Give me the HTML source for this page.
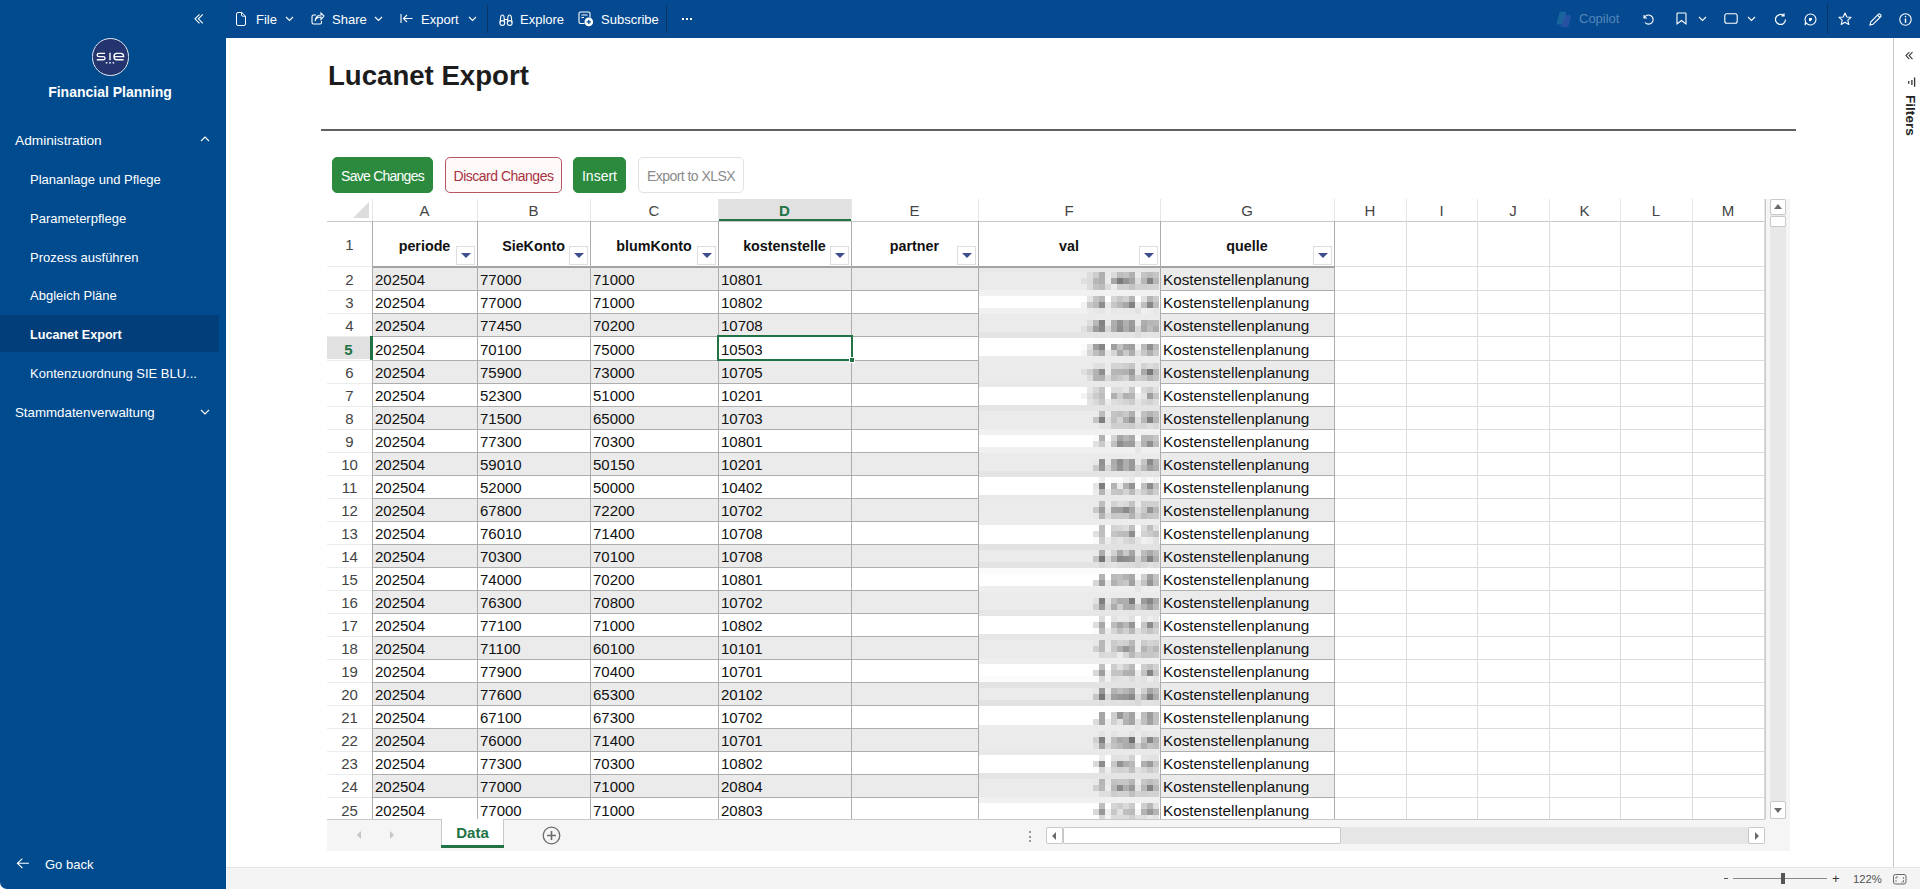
<!DOCTYPE html>
<html><head><meta charset="utf-8"><title>Lucanet Export</title>
<style>
*{box-sizing:border-box}
html,body{margin:0;padding:0}
body{width:1920px;height:889px;overflow:hidden;position:relative;background:#fff;font-family:"Liberation Sans", sans-serif;color:#222}
.abs{position:absolute}
#side{position:absolute;left:0;top:0;width:226px;height:889px;background:#004b8e;border-bottom-left-radius:7px;color:#fff}
#top{position:absolute;left:226px;top:0;width:1694px;height:38px;background:#054a91;color:#fff}
.nav{position:absolute;font-size:13px;color:#fff;white-space:nowrap;line-height:16px}
.tb{position:absolute;font-size:13px;color:#fff;white-space:nowrap;line-height:16px;top:12px}
.cell{position:absolute;font-size:15px;line-height:17px;white-space:nowrap;color:#111}
.hl{position:absolute;background:#adadad}
.ll{position:absolute;background:#dcdcdc}
.colh{position:absolute;top:201.5px;font-size:15px;line-height:17px;color:#444;text-align:center}
.rowh{position:absolute;left:327px;width:45px;font-size:15px;line-height:17px;color:#444;text-align:center}
.btn{position:absolute;top:157px;height:36px;border-radius:5px;font-size:13px;line-height:36px;text-align:center;white-space:nowrap}
.flt{position:absolute;width:19px;height:19px;border:1px solid #dedede;background:#fff}
.flt:after{content:"";position:absolute;left:4px;top:6px;border-left:5px solid transparent;border-right:5px solid transparent;border-top:5px solid #3d4f8e}
svg{position:absolute;overflow:visible}
</style></head><body>

<div id="side">
<svg style="left:193px;top:12px" width="12" height="12" viewBox="0 0 12 12"><path d="M6.5 2.4 L2 6.8 L6.5 11.3 M9.8 2.4 L5.4 6.8 L9.8 11.3" fill="none" stroke="#fff" stroke-width="1.1"/></svg>
<div class="abs" style="left:91.5px;top:38px;width:37.5px;height:37.5px;border-radius:50%;background:#23346f;border:1.4px solid #e4e7f0"></div>
<svg style="left:0;top:0" width="226" height="80"><path d="M105 53.4 L99 53.4 Q97.2 53.4 97.2 55 Q97.2 56.6 99 56.6 L103.2 56.6 Q105 56.6 105 58.2 Q105 59.8 103.2 59.8 L96.8 59.8 M110 52.8 L110 60.2 M123.6 59.8 L116.5 59.8 Q114 59.8 114 56.6 Q114 53.4 116.5 53.4 L121 53.4 Q123.6 53.4 123.6 56.6 L114 56.6" fill="none" stroke="#fff" stroke-width="1.4"/><rect x="105.8" y="62" width="1.6" height="1.6" fill="#dfe3ee"/><rect x="109.2" y="62" width="1.6" height="1.6" fill="#dfe3ee"/><rect x="112.6" y="62" width="1.6" height="1.6" fill="#dfe3ee"/></svg>
<div class="nav" style="left:0;top:83px;width:220px;text-align:center;font-weight:bold;font-size:14px;line-height:18px">Financial Planning</div>
<div class="nav" style="left:15px;top:132.5px;font-size:13.7px">Administration</div>
<svg style="left:200px;top:136px" width="10" height="6" viewBox="0 0 10 6"><path d="M1 5 L5 1 L9 5" fill="none" stroke="#fff" stroke-width="1.1"/></svg>
<div class="nav" style="left:30px;top:172px">Plananlage und Pflege</div>
<div class="nav" style="left:30px;top:211px">Parameterpflege</div>
<div class="nav" style="left:30px;top:250px">Prozess ausführen</div>
<div class="nav" style="left:30px;top:288px">Abgleich Pläne</div>
<div class="abs" style="left:0;top:315px;width:219px;height:37px;background:#023f7a"></div>
<div class="nav" style="left:30px;top:327px;font-weight:bold;font-size:12.6px">Lucanet Export</div>
<div class="nav" style="left:30px;top:366px">Kontenzuordnung SIE BLU...</div>
<div class="nav" style="left:15px;top:404.5px;font-size:13.3px">Stammdatenverwaltung</div>
<svg style="left:200px;top:409px" width="10" height="6" viewBox="0 0 10 6"><path d="M1 1 L5 5 L9 1" fill="none" stroke="#fff" stroke-width="1.1"/></svg>
<svg style="left:16px;top:857px" width="14" height="13" viewBox="0 0 14 13"><path d="M6.4 1.6 L1.4 6.3 L6.4 11 M1.4 6.3 L12.9 6.3" fill="none" stroke="#fff" stroke-width="1.1"/></svg>
<div class="nav" style="left:45px;top:857px">Go back</div>
</div>
<div id="top"></div>
<svg style="left:235px;top:11px" width="12" height="16" viewBox="0 0 12 16"><path d="M1.5 3 Q1.5 1.5 3 1.5 L6.8 1.5 L10.5 5.2 L10.5 13 Q10.5 14.5 9 14.5 L3 14.5 Q1.5 14.5 1.5 13 Z M6.5 1.5 L6.5 4 Q6.5 5.2 7.7 5.2 L10.5 5.2" fill="none" stroke="#fff" stroke-width="1"/></svg>
<div class="tb" style="left:256px">File</div>
<svg style="left:285px;top:16px" width="9" height="6" viewBox="0 0 9 6"><path d="M1 1 L4.5 4.5 L8 1" fill="none" stroke="#fff" stroke-width="1.1"/></svg>
<svg style="left:311px;top:12px" width="14" height="13" viewBox="0 0 14 13"><path d="M5 3 L2.5 3 Q1 3 1 4.5 L1 10.5 Q1 12 2.5 12 L9 12 Q10.5 12 10.5 10.5 L10.5 9 M4 9 Q5 5 10 5 L10 7.5 L13 4 L10 1 L10 3 Q5 3 4 9" fill="none" stroke="#fff" stroke-width="1.1"/></svg>
<div class="tb" style="left:332px">Share</div>
<svg style="left:374px;top:16px" width="9" height="6" viewBox="0 0 9 6"><path d="M1 1 L4.5 4.5 L8 1" fill="none" stroke="#fff" stroke-width="1.1"/></svg>
<svg style="left:400px;top:13px" width="13" height="11" viewBox="0 0 13 11"><path d="M1 1 L1 10 M12.5 5.5 L3.5 5.5 M7 2 L3.5 5.5 L7 9" fill="none" stroke="#fff" stroke-width="1.1"/></svg>
<div class="tb" style="left:421px">Export</div>
<svg style="left:468px;top:16px" width="9" height="6" viewBox="0 0 9 6"><path d="M1 1 L4.5 4.5 L8 1" fill="none" stroke="#fff" stroke-width="1.1"/></svg>
<div class="abs" style="left:487px;top:5px;width:1px;height:28px;background:#063466"></div>
<svg style="left:498px;top:13px" width="16" height="14" viewBox="0 0 16 14"><path d="M2 9.5 L2.8 3.5 Q3.2 2 4.3 2 Q5.6 2 6 3.5 L6.6 9.5 M9.4 9.5 L10 3.5 Q10.4 2 11.7 2 Q12.8 2 13.2 3.5 L14 9.5 M6.3 6.5 L9.7 6.5" fill="none" stroke="#fff" stroke-width="1.1"/><circle cx="4.3" cy="10" r="2.4" fill="none" stroke="#fff" stroke-width="1.1"/><circle cx="11.7" cy="10" r="2.4" fill="none" stroke="#fff" stroke-width="1.1"/></svg>
<div class="tb" style="left:520px">Explore</div>
<svg style="left:578px;top:11px" width="16" height="16" viewBox="0 0 16 16"><path d="M6.5 12.5 L2.5 12.5 Q1 12.5 1 11 L1 2.5 Q1 1 2.5 1 L10.5 1 Q12 1 12 2.5 L12 6.5 M3.5 4 L9.5 4 M3.5 6.5 L6 6.5" fill="none" stroke="#fff" stroke-width="1.1"/><circle cx="10.8" cy="10.9" r="4.3" fill="#fff"/><path d="M10.8 8.7 L10.8 13.1 M8.6 10.9 L13 10.9" stroke="#054a91" stroke-width="1.3"/></svg>
<div class="tb" style="left:601px">Subscribe</div>
<div class="abs" style="left:666px;top:5px;width:1px;height:28px;background:#063466"></div>
<div class="abs" style="left:682px;top:18px;width:2px;height:2px;background:#fff;box-shadow:4px 0 #fff,8px 0 #fff"></div>
<svg style="left:1555px;top:11px" width="18" height="17" viewBox="0 0 18 17"><path d="M4.5 1.5 Q5 0.8 6 0.8 L11.5 0.8 L8.5 12 Q8 13.5 6.5 13.5 L3 13.5 Q1.2 13.5 1.8 11.5 Z" fill="#1f6aa0" opacity="0.8"/><path d="M9.5 5 Q10 4 11 4 L14.5 4 Q16.3 4 15.8 6 L13.5 15 Q13 16.2 12 16.2 L5.5 16.2 Z" fill="#2d53a5" opacity="0.8"/></svg>
<div class="tb" style="left:1579px;top:11px;color:#5585b8">Copilot</div>
<svg style="left:1642px;top:13px" width="12" height="12" viewBox="0 0 12 12"><path d="M2 2 L2 5 L5 5 M2.3 4.8 A4.6 4.6 0 1 1 3 9.5" fill="none" stroke="#fff" stroke-width="1.1"/></svg>
<svg style="left:1676px;top:12px" width="11" height="13" viewBox="0 0 11 13"><path d="M1 1.8 Q1 1 1.8 1 L9.2 1 Q10 1 10 1.8 L10 12 L5.5 8.5 L1 12 Z" fill="none" stroke="#fff" stroke-width="1.1"/></svg>
<svg style="left:1698px;top:16px" width="9" height="6" viewBox="0 0 9 6"><path d="M1 1 L4.5 4.5 L8 1" fill="none" stroke="#fff" stroke-width="1.1"/></svg>
<svg style="left:1724px;top:13px" width="14" height="11" viewBox="0 0 14 11"><rect x="0.8" y="0.8" width="12.4" height="9.4" rx="2" fill="none" stroke="#fff" stroke-width="1.1"/></svg>
<svg style="left:1747px;top:16px" width="9" height="6" viewBox="0 0 9 6"><path d="M1 1 L4.5 4.5 L8 1" fill="none" stroke="#fff" stroke-width="1.1"/></svg>
<svg style="left:1774px;top:13px" width="13" height="13" viewBox="0 0 13 13"><path d="M11.5 6.5 A5 5 0 1 1 9.8 2.7 M10 0.5 L10 3 L7.5 3" fill="none" stroke="#fff" stroke-width="1.2"/></svg>
<svg style="left:1804px;top:13px" width="13" height="13" viewBox="0 0 13 13"><path d="M6.5 1 A5.5 5.5 0 1 1 2.3 10 L1 12 L1.5 8.8 A5.5 5.5 0 0 1 6.5 1 Z " fill="none" stroke="#fff" stroke-width="1.1"/><path d="M5 5 L8 5 L8 6.6 L6.5 8.2 L5 8.2 Z" fill="#fff"/></svg>
<div class="abs" style="left:1827px;top:4px;width:1px;height:30px;background:#063466"></div>
<svg style="left:1838px;top:12px" width="14" height="14" viewBox="0 0 14 14"><path d="M7 1 L8.8 5 L13 5.3 L9.8 8.1 L10.8 12.5 L7 10.2 L3.2 12.5 L4.2 8.1 L1 5.3 L5.2 5 Z" fill="none" stroke="#fff" stroke-width="1.1" stroke-linejoin="round"/></svg>
<svg style="left:1869px;top:13px" width="13" height="13" viewBox="0 0 13 13"><path d="M1 12 L1.7 9 L9.5 1.2 Q10.3 0.5 11.1 1.3 L11.8 2 Q12.5 2.8 11.8 3.5 L4 11.3 Z M8.5 2.2 L10.8 4.5" fill="none" stroke="#fff" stroke-width="1.1"/></svg>
<svg style="left:1899px;top:13px" width="13" height="13" viewBox="0 0 13 13"><circle cx="6.5" cy="6.5" r="5.7" fill="none" stroke="#fff" stroke-width="1.1"/><path d="M6.5 5.5 L6.5 9.8" stroke="#fff" stroke-width="1.4"/><circle cx="6.5" cy="3.6" r="0.8" fill="#fff"/></svg>
<div class="abs" style="left:328px;top:60px;font-size:27.6px;font-weight:bold;color:#1c1c1c;line-height:32px;white-space:nowrap">Lucanet Export</div>
<div class="abs" style="left:321px;top:129px;width:1475px;height:2px;background:#606060"></div>
<div class="btn" style="left:332px;width:101px;background:#2b8a3e;color:#fff;border:1px solid #2b8a3e;font-size:14px;letter-spacing:-0.75px">Save Changes</div>
<div class="btn" style="left:445px;width:117px;background:#fdf9f9;color:#a8323e;border:1px solid #b85660;font-size:14px;letter-spacing:-0.5px">Discard Changes</div>
<div class="btn" style="left:573px;width:53px;background:#2b8a3e;color:#fff;border:1px solid #2b8a3e;font-size:14px">Insert</div>
<div class="btn" style="left:638px;width:106px;background:#fff;color:#8a8a8a;border:1px solid #e2e2e2;font-size:14px;letter-spacing:-0.55px">Export to XLSX</div>
<div class="abs" style="left:372px;top:267px;width:962px;height:23px;background:#ebebeb"></div>
<div class="abs" style="left:372px;top:313px;width:962px;height:23px;background:#ebebeb"></div>
<div class="abs" style="left:372px;top:360px;width:962px;height:23px;background:#ebebeb"></div>
<div class="abs" style="left:372px;top:406px;width:962px;height:23px;background:#ebebeb"></div>
<div class="abs" style="left:372px;top:452px;width:962px;height:23px;background:#ebebeb"></div>
<div class="abs" style="left:372px;top:498px;width:962px;height:23px;background:#ebebeb"></div>
<div class="abs" style="left:372px;top:544px;width:962px;height:23px;background:#ebebeb"></div>
<div class="abs" style="left:372px;top:590px;width:962px;height:23px;background:#ebebeb"></div>
<div class="abs" style="left:372px;top:636px;width:962px;height:23px;background:#ebebeb"></div>
<div class="abs" style="left:372px;top:682px;width:962px;height:23px;background:#ebebeb"></div>
<div class="abs" style="left:372px;top:728px;width:962px;height:23px;background:#ebebeb"></div>
<div class="abs" style="left:372px;top:774px;width:962px;height:23px;background:#ebebeb"></div>
<div class="abs" style="left:718px;top:199px;width:133px;height:22px;background:#e1e1e1"></div>
<div class="abs" style="left:718px;top:219px;width:134px;height:2px;background:#217346"></div>
<div class="abs" style="left:327px;top:336px;width:44px;height:23px;background:#e1e1e1"></div>
<svg style="left:353px;top:202px" width="16" height="16" viewBox="0 0 16 16"><path d="M16 0 L16 16 L0 16 Z" fill="#dcdcdc"/></svg>
<div class="ll" style="left:372px;top:199px;width:1px;height:22px;background:#e6e6e6"></div>
<div class="ll" style="left:477px;top:199px;width:1px;height:22px;background:#e6e6e6"></div>
<div class="ll" style="left:590px;top:199px;width:1px;height:22px;background:#e6e6e6"></div>
<div class="ll" style="left:718px;top:199px;width:1px;height:22px;background:#e6e6e6"></div>
<div class="ll" style="left:851px;top:199px;width:1px;height:22px;background:#e6e6e6"></div>
<div class="ll" style="left:978px;top:199px;width:1px;height:22px;background:#e6e6e6"></div>
<div class="ll" style="left:1160px;top:199px;width:1px;height:22px;background:#e6e6e6"></div>
<div class="ll" style="left:1334px;top:199px;width:1px;height:22px;background:#e6e6e6"></div>
<div class="ll" style="left:1406px;top:199px;width:1px;height:22px;background:#e6e6e6"></div>
<div class="ll" style="left:1477px;top:199px;width:1px;height:22px;background:#e6e6e6"></div>
<div class="ll" style="left:1549px;top:199px;width:1px;height:22px;background:#e6e6e6"></div>
<div class="ll" style="left:1620px;top:199px;width:1px;height:22px;background:#e6e6e6"></div>
<div class="ll" style="left:1692px;top:199px;width:1px;height:22px;background:#e6e6e6"></div>
<div class="ll" style="left:1764px;top:199px;width:1px;height:22px;background:#e6e6e6"></div>
<div class="abs" style="left:327px;top:221px;width:1438px;height:1px;background:#c8c8c8"></div>
<div class="colh" style="left:372px;width:105px;">A</div>
<div class="colh" style="left:477px;width:113px;">B</div>
<div class="colh" style="left:590px;width:128px;">C</div>
<div class="colh" style="left:718px;width:133px;color:#217346;font-weight:bold">D</div>
<div class="colh" style="left:851px;width:127px;">E</div>
<div class="colh" style="left:978px;width:182px;">F</div>
<div class="colh" style="left:1160px;width:174px;">G</div>
<div class="colh" style="left:1334px;width:72px;">H</div>
<div class="colh" style="left:1406px;width:71px;">I</div>
<div class="colh" style="left:1477px;width:72px;">J</div>
<div class="colh" style="left:1549px;width:71px;">K</div>
<div class="colh" style="left:1620px;width:72px;">L</div>
<div class="colh" style="left:1692px;width:72px;">M</div>
<div class="hl" style="left:372px;top:266px;width:962px;height:2px;background:#a3a3a3"></div>
<div class="ll" style="left:1334px;top:266px;width:431px;height:1px"></div>
<div class="ll" style="left:327px;top:266px;width:45px;height:1px;background:#ececec"></div>
<div class="hl" style="left:372px;top:290px;width:962px;height:1px"></div>
<div class="ll" style="left:1334px;top:290px;width:431px;height:1px"></div>
<div class="ll" style="left:327px;top:290px;width:45px;height:1px;background:#ececec"></div>
<div class="hl" style="left:372px;top:313px;width:962px;height:1px"></div>
<div class="ll" style="left:1334px;top:313px;width:431px;height:1px"></div>
<div class="ll" style="left:327px;top:313px;width:45px;height:1px;background:#ececec"></div>
<div class="hl" style="left:372px;top:336px;width:962px;height:1px"></div>
<div class="ll" style="left:1334px;top:336px;width:431px;height:1px"></div>
<div class="ll" style="left:327px;top:336px;width:45px;height:1px;background:#ececec"></div>
<div class="hl" style="left:372px;top:360px;width:962px;height:1px"></div>
<div class="ll" style="left:1334px;top:360px;width:431px;height:1px"></div>
<div class="ll" style="left:327px;top:360px;width:45px;height:1px;background:#ececec"></div>
<div class="hl" style="left:372px;top:383px;width:962px;height:1px"></div>
<div class="ll" style="left:1334px;top:383px;width:431px;height:1px"></div>
<div class="ll" style="left:327px;top:383px;width:45px;height:1px;background:#ececec"></div>
<div class="hl" style="left:372px;top:406px;width:962px;height:1px"></div>
<div class="ll" style="left:1334px;top:406px;width:431px;height:1px"></div>
<div class="ll" style="left:327px;top:406px;width:45px;height:1px;background:#ececec"></div>
<div class="hl" style="left:372px;top:429px;width:962px;height:1px"></div>
<div class="ll" style="left:1334px;top:429px;width:431px;height:1px"></div>
<div class="ll" style="left:327px;top:429px;width:45px;height:1px;background:#ececec"></div>
<div class="hl" style="left:372px;top:452px;width:962px;height:1px"></div>
<div class="ll" style="left:1334px;top:452px;width:431px;height:1px"></div>
<div class="ll" style="left:327px;top:452px;width:45px;height:1px;background:#ececec"></div>
<div class="hl" style="left:372px;top:475px;width:962px;height:1px"></div>
<div class="ll" style="left:1334px;top:475px;width:431px;height:1px"></div>
<div class="ll" style="left:327px;top:475px;width:45px;height:1px;background:#ececec"></div>
<div class="hl" style="left:372px;top:498px;width:962px;height:1px"></div>
<div class="ll" style="left:1334px;top:498px;width:431px;height:1px"></div>
<div class="ll" style="left:327px;top:498px;width:45px;height:1px;background:#ececec"></div>
<div class="hl" style="left:372px;top:521px;width:962px;height:1px"></div>
<div class="ll" style="left:1334px;top:521px;width:431px;height:1px"></div>
<div class="ll" style="left:327px;top:521px;width:45px;height:1px;background:#ececec"></div>
<div class="hl" style="left:372px;top:544px;width:962px;height:1px"></div>
<div class="ll" style="left:1334px;top:544px;width:431px;height:1px"></div>
<div class="ll" style="left:327px;top:544px;width:45px;height:1px;background:#ececec"></div>
<div class="hl" style="left:372px;top:567px;width:962px;height:1px"></div>
<div class="ll" style="left:1334px;top:567px;width:431px;height:1px"></div>
<div class="ll" style="left:327px;top:567px;width:45px;height:1px;background:#ececec"></div>
<div class="hl" style="left:372px;top:590px;width:962px;height:1px"></div>
<div class="ll" style="left:1334px;top:590px;width:431px;height:1px"></div>
<div class="ll" style="left:327px;top:590px;width:45px;height:1px;background:#ececec"></div>
<div class="hl" style="left:372px;top:613px;width:962px;height:1px"></div>
<div class="ll" style="left:1334px;top:613px;width:431px;height:1px"></div>
<div class="ll" style="left:327px;top:613px;width:45px;height:1px;background:#ececec"></div>
<div class="hl" style="left:372px;top:636px;width:962px;height:1px"></div>
<div class="ll" style="left:1334px;top:636px;width:431px;height:1px"></div>
<div class="ll" style="left:327px;top:636px;width:45px;height:1px;background:#ececec"></div>
<div class="hl" style="left:372px;top:659px;width:962px;height:1px"></div>
<div class="ll" style="left:1334px;top:659px;width:431px;height:1px"></div>
<div class="ll" style="left:327px;top:659px;width:45px;height:1px;background:#ececec"></div>
<div class="hl" style="left:372px;top:682px;width:962px;height:1px"></div>
<div class="ll" style="left:1334px;top:682px;width:431px;height:1px"></div>
<div class="ll" style="left:327px;top:682px;width:45px;height:1px;background:#ececec"></div>
<div class="hl" style="left:372px;top:705px;width:962px;height:1px"></div>
<div class="ll" style="left:1334px;top:705px;width:431px;height:1px"></div>
<div class="ll" style="left:327px;top:705px;width:45px;height:1px;background:#ececec"></div>
<div class="hl" style="left:372px;top:728px;width:962px;height:1px"></div>
<div class="ll" style="left:1334px;top:728px;width:431px;height:1px"></div>
<div class="ll" style="left:327px;top:728px;width:45px;height:1px;background:#ececec"></div>
<div class="hl" style="left:372px;top:751px;width:962px;height:1px"></div>
<div class="ll" style="left:1334px;top:751px;width:431px;height:1px"></div>
<div class="ll" style="left:327px;top:751px;width:45px;height:1px;background:#ececec"></div>
<div class="hl" style="left:372px;top:774px;width:962px;height:1px"></div>
<div class="ll" style="left:1334px;top:774px;width:431px;height:1px"></div>
<div class="ll" style="left:327px;top:774px;width:45px;height:1px;background:#ececec"></div>
<div class="hl" style="left:372px;top:797px;width:962px;height:1px"></div>
<div class="ll" style="left:1334px;top:797px;width:431px;height:1px"></div>
<div class="ll" style="left:327px;top:797px;width:45px;height:1px;background:#ececec"></div>
<div class="hl" style="left:372px;top:820px;width:962px;height:1px"></div>
<div class="ll" style="left:1334px;top:820px;width:431px;height:1px"></div>
<div class="ll" style="left:327px;top:820px;width:45px;height:1px;background:#ececec"></div>
<div class="hl" style="left:372px;top:221px;width:1px;height:598px"></div>
<div class="hl" style="left:477px;top:221px;width:1px;height:598px"></div>
<div class="hl" style="left:590px;top:221px;width:1px;height:598px"></div>
<div class="hl" style="left:718px;top:221px;width:1px;height:598px"></div>
<div class="hl" style="left:851px;top:221px;width:1px;height:598px"></div>
<div class="hl" style="left:978px;top:221px;width:1px;height:598px"></div>
<div class="hl" style="left:1160px;top:221px;width:1px;height:598px"></div>
<div class="hl" style="left:1334px;top:221px;width:1px;height:598px"></div>
<div class="ll" style="left:1406px;top:221px;width:1px;height:598px"></div>
<div class="ll" style="left:1477px;top:221px;width:1px;height:598px"></div>
<div class="ll" style="left:1549px;top:221px;width:1px;height:598px"></div>
<div class="ll" style="left:1620px;top:221px;width:1px;height:598px"></div>
<div class="ll" style="left:1692px;top:221px;width:1px;height:598px"></div>
<div class="ll" style="left:1764px;top:221px;width:1px;height:598px"></div>
<div class="abs" style="left:1765px;top:199px;width:1px;height:620px;background:#c8c8c8"></div>
<div class="rowh" style="top:236px">1</div>
<div class="rowh" style="top:271.3px;">2</div>
<div class="rowh" style="top:294.4px;">3</div>
<div class="rowh" style="top:317.4px;">4</div>
<div class="rowh" style="top:340.5px;color:#217346;font-weight:bold;width:43px">5</div>
<div class="rowh" style="top:363.5px;">6</div>
<div class="rowh" style="top:386.6px;">7</div>
<div class="rowh" style="top:409.6px;">8</div>
<div class="rowh" style="top:432.6px;">9</div>
<div class="rowh" style="top:455.7px;">10</div>
<div class="rowh" style="top:478.8px;">11</div>
<div class="rowh" style="top:501.8px;">12</div>
<div class="rowh" style="top:524.9px;">13</div>
<div class="rowh" style="top:547.9px;">14</div>
<div class="rowh" style="top:571.0px;">15</div>
<div class="rowh" style="top:594.0px;">16</div>
<div class="rowh" style="top:617.0px;">17</div>
<div class="rowh" style="top:640.1px;">18</div>
<div class="rowh" style="top:663.2px;">19</div>
<div class="rowh" style="top:686.2px;">20</div>
<div class="rowh" style="top:709.2px;">21</div>
<div class="rowh" style="top:732.3px;">22</div>
<div class="rowh" style="top:755.4px;">23</div>
<div class="rowh" style="top:778.4px;">24</div>
<div class="rowh" style="top:801.5px;">25</div>
<div class="cell" style="left:372px;top:237.5px;width:105px;text-align:center;font-weight:bold;font-size:14.3px">periode</div>
<div class="flt" style="left:456px;top:246px"></div>
<div class="cell" style="left:477px;top:237.5px;width:113px;text-align:center;font-weight:bold;font-size:14.3px">SieKonto</div>
<div class="flt" style="left:569px;top:246px"></div>
<div class="cell" style="left:590px;top:237.5px;width:128px;text-align:center;font-weight:bold;font-size:14.3px">blumKonto</div>
<div class="flt" style="left:697px;top:246px"></div>
<div class="cell" style="left:718px;top:237.5px;width:133px;text-align:center;font-weight:bold;font-size:14.3px">kostenstelle</div>
<div class="flt" style="left:830px;top:246px"></div>
<div class="cell" style="left:851px;top:237.5px;width:127px;text-align:center;font-weight:bold;font-size:14.3px">partner</div>
<div class="flt" style="left:957px;top:246px"></div>
<div class="cell" style="left:978px;top:237.5px;width:182px;text-align:center;font-weight:bold;font-size:14.3px">val</div>
<div class="flt" style="left:1139px;top:246px"></div>
<div class="cell" style="left:1160px;top:237.5px;width:174px;text-align:center;font-weight:bold;font-size:14.3px">quelle</div>
<div class="flt" style="left:1313px;top:246px"></div>
<div class="cell" style="left:375px;top:271.3px">202504</div>
<div class="cell" style="left:480px;top:271.3px">77000</div>
<div class="cell" style="left:593px;top:271.3px">71000</div>
<div class="cell" style="left:721px;top:271.3px">10801</div>
<div class="cell" style="left:1163px;top:271.3px;font-size:15.3px">Kostenstellenplanung</div>
<div class="cell" style="left:375px;top:294.4px">202504</div>
<div class="cell" style="left:480px;top:294.4px">77000</div>
<div class="cell" style="left:593px;top:294.4px">71000</div>
<div class="cell" style="left:721px;top:294.4px">10802</div>
<div class="cell" style="left:1163px;top:294.4px;font-size:15.3px">Kostenstellenplanung</div>
<div class="cell" style="left:375px;top:317.4px">202504</div>
<div class="cell" style="left:480px;top:317.4px">77450</div>
<div class="cell" style="left:593px;top:317.4px">70200</div>
<div class="cell" style="left:721px;top:317.4px">10708</div>
<div class="cell" style="left:1163px;top:317.4px;font-size:15.3px">Kostenstellenplanung</div>
<div class="cell" style="left:375px;top:340.5px">202504</div>
<div class="cell" style="left:480px;top:340.5px">70100</div>
<div class="cell" style="left:593px;top:340.5px">75000</div>
<div class="cell" style="left:721px;top:340.5px">10503</div>
<div class="cell" style="left:1163px;top:340.5px;font-size:15.3px">Kostenstellenplanung</div>
<div class="cell" style="left:375px;top:363.5px">202504</div>
<div class="cell" style="left:480px;top:363.5px">75900</div>
<div class="cell" style="left:593px;top:363.5px">73000</div>
<div class="cell" style="left:721px;top:363.5px">10705</div>
<div class="cell" style="left:1163px;top:363.5px;font-size:15.3px">Kostenstellenplanung</div>
<div class="cell" style="left:375px;top:386.6px">202504</div>
<div class="cell" style="left:480px;top:386.6px">52300</div>
<div class="cell" style="left:593px;top:386.6px">51000</div>
<div class="cell" style="left:721px;top:386.6px">10201</div>
<div class="cell" style="left:1163px;top:386.6px;font-size:15.3px">Kostenstellenplanung</div>
<div class="cell" style="left:375px;top:409.6px">202504</div>
<div class="cell" style="left:480px;top:409.6px">71500</div>
<div class="cell" style="left:593px;top:409.6px">65000</div>
<div class="cell" style="left:721px;top:409.6px">10703</div>
<div class="cell" style="left:1163px;top:409.6px;font-size:15.3px">Kostenstellenplanung</div>
<div class="cell" style="left:375px;top:432.6px">202504</div>
<div class="cell" style="left:480px;top:432.6px">77300</div>
<div class="cell" style="left:593px;top:432.6px">70300</div>
<div class="cell" style="left:721px;top:432.6px">10801</div>
<div class="cell" style="left:1163px;top:432.6px;font-size:15.3px">Kostenstellenplanung</div>
<div class="cell" style="left:375px;top:455.7px">202504</div>
<div class="cell" style="left:480px;top:455.7px">59010</div>
<div class="cell" style="left:593px;top:455.7px">50150</div>
<div class="cell" style="left:721px;top:455.7px">10201</div>
<div class="cell" style="left:1163px;top:455.7px;font-size:15.3px">Kostenstellenplanung</div>
<div class="cell" style="left:375px;top:478.8px">202504</div>
<div class="cell" style="left:480px;top:478.8px">52000</div>
<div class="cell" style="left:593px;top:478.8px">50000</div>
<div class="cell" style="left:721px;top:478.8px">10402</div>
<div class="cell" style="left:1163px;top:478.8px;font-size:15.3px">Kostenstellenplanung</div>
<div class="cell" style="left:375px;top:501.8px">202504</div>
<div class="cell" style="left:480px;top:501.8px">67800</div>
<div class="cell" style="left:593px;top:501.8px">72200</div>
<div class="cell" style="left:721px;top:501.8px">10702</div>
<div class="cell" style="left:1163px;top:501.8px;font-size:15.3px">Kostenstellenplanung</div>
<div class="cell" style="left:375px;top:524.9px">202504</div>
<div class="cell" style="left:480px;top:524.9px">76010</div>
<div class="cell" style="left:593px;top:524.9px">71400</div>
<div class="cell" style="left:721px;top:524.9px">10708</div>
<div class="cell" style="left:1163px;top:524.9px;font-size:15.3px">Kostenstellenplanung</div>
<div class="cell" style="left:375px;top:547.9px">202504</div>
<div class="cell" style="left:480px;top:547.9px">70300</div>
<div class="cell" style="left:593px;top:547.9px">70100</div>
<div class="cell" style="left:721px;top:547.9px">10708</div>
<div class="cell" style="left:1163px;top:547.9px;font-size:15.3px">Kostenstellenplanung</div>
<div class="cell" style="left:375px;top:571.0px">202504</div>
<div class="cell" style="left:480px;top:571.0px">74000</div>
<div class="cell" style="left:593px;top:571.0px">70200</div>
<div class="cell" style="left:721px;top:571.0px">10801</div>
<div class="cell" style="left:1163px;top:571.0px;font-size:15.3px">Kostenstellenplanung</div>
<div class="cell" style="left:375px;top:594.0px">202504</div>
<div class="cell" style="left:480px;top:594.0px">76300</div>
<div class="cell" style="left:593px;top:594.0px">70800</div>
<div class="cell" style="left:721px;top:594.0px">10702</div>
<div class="cell" style="left:1163px;top:594.0px;font-size:15.3px">Kostenstellenplanung</div>
<div class="cell" style="left:375px;top:617.0px">202504</div>
<div class="cell" style="left:480px;top:617.0px">77100</div>
<div class="cell" style="left:593px;top:617.0px">71000</div>
<div class="cell" style="left:721px;top:617.0px">10802</div>
<div class="cell" style="left:1163px;top:617.0px;font-size:15.3px">Kostenstellenplanung</div>
<div class="cell" style="left:375px;top:640.1px">202504</div>
<div class="cell" style="left:480px;top:640.1px">71100</div>
<div class="cell" style="left:593px;top:640.1px">60100</div>
<div class="cell" style="left:721px;top:640.1px">10101</div>
<div class="cell" style="left:1163px;top:640.1px;font-size:15.3px">Kostenstellenplanung</div>
<div class="cell" style="left:375px;top:663.2px">202504</div>
<div class="cell" style="left:480px;top:663.2px">77900</div>
<div class="cell" style="left:593px;top:663.2px">70400</div>
<div class="cell" style="left:721px;top:663.2px">10701</div>
<div class="cell" style="left:1163px;top:663.2px;font-size:15.3px">Kostenstellenplanung</div>
<div class="cell" style="left:375px;top:686.2px">202504</div>
<div class="cell" style="left:480px;top:686.2px">77600</div>
<div class="cell" style="left:593px;top:686.2px">65300</div>
<div class="cell" style="left:721px;top:686.2px">20102</div>
<div class="cell" style="left:1163px;top:686.2px;font-size:15.3px">Kostenstellenplanung</div>
<div class="cell" style="left:375px;top:709.2px">202504</div>
<div class="cell" style="left:480px;top:709.2px">67100</div>
<div class="cell" style="left:593px;top:709.2px">67300</div>
<div class="cell" style="left:721px;top:709.2px">10702</div>
<div class="cell" style="left:1163px;top:709.2px;font-size:15.3px">Kostenstellenplanung</div>
<div class="cell" style="left:375px;top:732.3px">202504</div>
<div class="cell" style="left:480px;top:732.3px">76000</div>
<div class="cell" style="left:593px;top:732.3px">71400</div>
<div class="cell" style="left:721px;top:732.3px">10701</div>
<div class="cell" style="left:1163px;top:732.3px;font-size:15.3px">Kostenstellenplanung</div>
<div class="cell" style="left:375px;top:755.4px">202504</div>
<div class="cell" style="left:480px;top:755.4px">77300</div>
<div class="cell" style="left:593px;top:755.4px">70300</div>
<div class="cell" style="left:721px;top:755.4px">10802</div>
<div class="cell" style="left:1163px;top:755.4px;font-size:15.3px">Kostenstellenplanung</div>
<div class="cell" style="left:375px;top:778.4px">202504</div>
<div class="cell" style="left:480px;top:778.4px">77000</div>
<div class="cell" style="left:593px;top:778.4px">71000</div>
<div class="cell" style="left:721px;top:778.4px">20804</div>
<div class="cell" style="left:1163px;top:778.4px;font-size:15.3px">Kostenstellenplanung</div>
<div class="cell" style="left:375px;top:801.5px">202504</div>
<div class="cell" style="left:480px;top:801.5px">77000</div>
<div class="cell" style="left:593px;top:801.5px">71000</div>
<div class="cell" style="left:721px;top:801.5px">20803</div>
<div class="cell" style="left:1163px;top:801.5px;font-size:15.3px">Kostenstellenplanung</div>
<svg style="left:0;top:0" width="1920" height="889" shape-rendering="crispEdges"><rect x="979" y="268" width="181" height="4" fill="#e7e7e7"/><rect x="979" y="272" width="108" height="6" fill="#ebebeb"/><rect x="1087" y="272" width="6" height="6" fill="#dddddd"/><rect x="1093" y="272" width="6" height="6" fill="#cdcdcd"/><rect x="1099" y="272" width="6" height="6" fill="#afafaf"/><rect x="1105" y="272" width="6" height="6" fill="#eaeaea"/><rect x="1111" y="272" width="6" height="6" fill="#dadada"/><rect x="1117" y="272" width="6" height="6" fill="#bcbcbc"/><rect x="1123" y="272" width="6" height="6" fill="#c3c3c3"/><rect x="1129" y="272" width="6" height="6" fill="#b0b0b0"/><rect x="1135" y="272" width="6" height="6" fill="#eaeaea"/><rect x="1141" y="272" width="6" height="6" fill="#c4c4c4"/><rect x="1147" y="272" width="6" height="6" fill="#bbbbbb"/><rect x="1153" y="272" width="6" height="6" fill="#c5c5c5"/><rect x="1159" y="272" width="1" height="6" fill="#ebebeb"/><rect x="979" y="278" width="102" height="6" fill="#ebebeb"/><rect x="1081" y="278" width="6" height="6" fill="#dfdfdf"/><rect x="1087" y="278" width="6" height="6" fill="#dbdbdb"/><rect x="1093" y="278" width="6" height="6" fill="#b7b7b7"/><rect x="1099" y="278" width="6" height="6" fill="#b0b0b0"/><rect x="1105" y="278" width="6" height="6" fill="#eaeaea"/><rect x="1111" y="278" width="6" height="6" fill="#a6a6a6"/><rect x="1117" y="278" width="6" height="6" fill="#7c7c7c"/><rect x="1123" y="278" width="6" height="6" fill="#949494"/><rect x="1129" y="278" width="6" height="6" fill="#a5a5a5"/><rect x="1135" y="278" width="6" height="6" fill="#dddddd"/><rect x="1141" y="278" width="6" height="6" fill="#b7b7b7"/><rect x="1147" y="278" width="6" height="6" fill="#838383"/><rect x="1153" y="278" width="6" height="6" fill="#b7b7b7"/><rect x="1159" y="278" width="1" height="6" fill="#ebebeb"/><rect x="979" y="284" width="108" height="6" fill="#ebebeb"/><rect x="1087" y="284" width="6" height="6" fill="#dcdcdc"/><rect x="1093" y="284" width="6" height="6" fill="#c3c3c3"/><rect x="1099" y="284" width="6" height="6" fill="#bcbcbc"/><rect x="1105" y="284" width="6" height="6" fill="#dbdbdb"/><rect x="1111" y="284" width="6" height="6" fill="#ebebeb"/><rect x="1117" y="284" width="12" height="6" fill="#d0d0d0"/><rect x="1129" y="284" width="6" height="6" fill="#c4c4c4"/><rect x="1135" y="284" width="6" height="6" fill="#d2d2d2"/><rect x="1141" y="284" width="6" height="6" fill="#cfcfcf"/><rect x="1147" y="284" width="12" height="6" fill="#d2d2d2"/><rect x="1159" y="284" width="1" height="6" fill="#ebebeb"/><rect x="979" y="290" width="181" height="6" fill="#f1f1f1"/><rect x="979" y="296" width="108" height="6" fill="#ffffff"/><rect x="1087" y="296" width="6" height="6" fill="#e5e5e5"/><rect x="1093" y="296" width="6" height="6" fill="#c4c4c4"/><rect x="1099" y="296" width="6" height="6" fill="#b7b7b7"/><rect x="1105" y="296" width="6" height="6" fill="#ffffff"/><rect x="1111" y="296" width="6" height="6" fill="#d5d5d5"/><rect x="1117" y="296" width="6" height="6" fill="#c8c8c8"/><rect x="1123" y="296" width="6" height="6" fill="#d2d2d2"/><rect x="1129" y="296" width="6" height="6" fill="#b4b4b4"/><rect x="1135" y="296" width="6" height="6" fill="#ffffff"/><rect x="1141" y="296" width="6" height="6" fill="#e1e1e1"/><rect x="1147" y="296" width="6" height="6" fill="#b7b7b7"/><rect x="1153" y="296" width="6" height="6" fill="#cacaca"/><rect x="1159" y="296" width="1" height="6" fill="#ffffff"/><rect x="979" y="302" width="102" height="6" fill="#ffffff"/><rect x="1081" y="302" width="6" height="6" fill="#f2f2f2"/><rect x="1087" y="302" width="6" height="6" fill="#c8c8c8"/><rect x="1093" y="302" width="6" height="6" fill="#bbbbbb"/><rect x="1099" y="302" width="6" height="6" fill="#8e8e8e"/><rect x="1105" y="302" width="6" height="6" fill="#eaeaea"/><rect x="1111" y="302" width="6" height="6" fill="#c7c7c7"/><rect x="1117" y="302" width="6" height="6" fill="#b7b7b7"/><rect x="1123" y="302" width="6" height="6" fill="#a8a8a8"/><rect x="1129" y="302" width="6" height="6" fill="#828282"/><rect x="1135" y="302" width="6" height="6" fill="#eaeaea"/><rect x="1141" y="302" width="6" height="6" fill="#bfbfbf"/><rect x="1147" y="302" width="6" height="6" fill="#888888"/><rect x="1153" y="302" width="6" height="6" fill="#bdbdbd"/><rect x="1159" y="302" width="1" height="6" fill="#ffffff"/><rect x="979" y="308" width="108" height="6" fill="#f0f0f0"/><rect x="1087" y="308" width="6" height="6" fill="#ebebeb"/><rect x="1093" y="308" width="6" height="6" fill="#e8e8e8"/><rect x="1099" y="308" width="6" height="6" fill="#e5e5e5"/><rect x="1105" y="308" width="6" height="6" fill="#ededed"/><rect x="1111" y="308" width="6" height="6" fill="#e7e7e7"/><rect x="1117" y="308" width="6" height="6" fill="#eaeaea"/><rect x="1123" y="308" width="12" height="6" fill="#e8e8e8"/><rect x="1135" y="308" width="6" height="6" fill="#e1e1e1"/><rect x="1141" y="308" width="6" height="6" fill="#f0f0f0"/><rect x="1147" y="308" width="6" height="6" fill="#ececec"/><rect x="1153" y="308" width="6" height="6" fill="#e8e8e8"/><rect x="1159" y="308" width="1" height="6" fill="#f0f0f0"/><rect x="979" y="314" width="181" height="6" fill="#ebebeb"/><rect x="979" y="320" width="108" height="6" fill="#ebebeb"/><rect x="1087" y="320" width="6" height="6" fill="#dddddd"/><rect x="1093" y="320" width="6" height="6" fill="#b8b8b8"/><rect x="1099" y="320" width="6" height="6" fill="#828282"/><rect x="1105" y="320" width="6" height="6" fill="#e9e9e9"/><rect x="1111" y="320" width="6" height="6" fill="#aeaeae"/><rect x="1117" y="320" width="6" height="6" fill="#939393"/><rect x="1123" y="320" width="6" height="6" fill="#b0b0b0"/><rect x="1129" y="320" width="6" height="6" fill="#9a9a9a"/><rect x="1135" y="320" width="6" height="6" fill="#e9e9e9"/><rect x="1141" y="320" width="6" height="6" fill="#adadad"/><rect x="1147" y="320" width="6" height="6" fill="#b6b6b6"/><rect x="1153" y="320" width="6" height="6" fill="#b8b8b8"/><rect x="1159" y="320" width="1" height="6" fill="#ebebeb"/><rect x="979" y="326" width="102" height="6" fill="#ebebeb"/><rect x="1081" y="326" width="6" height="6" fill="#dfdfdf"/><rect x="1087" y="326" width="6" height="6" fill="#cccccc"/><rect x="1093" y="326" width="6" height="6" fill="#9d9d9d"/><rect x="1099" y="326" width="6" height="6" fill="#888888"/><rect x="1105" y="326" width="6" height="6" fill="#d7d7d7"/><rect x="1111" y="326" width="6" height="6" fill="#acacac"/><rect x="1117" y="326" width="6" height="6" fill="#8e8e8e"/><rect x="1123" y="326" width="6" height="6" fill="#acacac"/><rect x="1129" y="326" width="6" height="6" fill="#969696"/><rect x="1135" y="326" width="6" height="6" fill="#d7d7d7"/><rect x="1141" y="326" width="6" height="6" fill="#a9a9a9"/><rect x="1147" y="326" width="6" height="6" fill="#bcbcbc"/><rect x="1153" y="326" width="6" height="6" fill="#ababab"/><rect x="1159" y="326" width="1" height="6" fill="#ebebeb"/><rect x="979" y="332" width="156" height="6" fill="#e4e4e4"/><rect x="1135" y="332" width="6" height="6" fill="#dddddd"/><rect x="1141" y="332" width="19" height="6" fill="#e4e4e4"/><rect x="979" y="338" width="114" height="6" fill="#ffffff"/><rect x="1093" y="338" width="12" height="6" fill="#fcfcfc"/><rect x="1105" y="338" width="18" height="6" fill="#ffffff"/><rect x="1123" y="338" width="12" height="6" fill="#fcfcfc"/><rect x="1135" y="338" width="6" height="6" fill="#ffffff"/><rect x="1141" y="338" width="6" height="6" fill="#fcfcfc"/><rect x="1147" y="338" width="6" height="6" fill="#ffffff"/><rect x="1153" y="338" width="6" height="6" fill="#fcfcfc"/><rect x="1159" y="338" width="1" height="6" fill="#ffffff"/><rect x="979" y="344" width="102" height="6" fill="#ffffff"/><rect x="1081" y="344" width="6" height="6" fill="#fcfcfc"/><rect x="1087" y="344" width="6" height="6" fill="#e0e0e0"/><rect x="1093" y="344" width="6" height="6" fill="#9e9e9e"/><rect x="1099" y="344" width="6" height="6" fill="#878787"/><rect x="1105" y="344" width="6" height="6" fill="#fdfdfd"/><rect x="1111" y="344" width="6" height="6" fill="#9f9f9f"/><rect x="1117" y="344" width="6" height="6" fill="#c1c1c1"/><rect x="1123" y="344" width="6" height="6" fill="#a4a4a4"/><rect x="1129" y="344" width="6" height="6" fill="#9e9e9e"/><rect x="1135" y="344" width="6" height="6" fill="#f4f4f4"/><rect x="1141" y="344" width="6" height="6" fill="#b9b9b9"/><rect x="1147" y="344" width="6" height="6" fill="#8f8f8f"/><rect x="1153" y="344" width="6" height="6" fill="#bbbbbb"/><rect x="1159" y="344" width="1" height="6" fill="#ffffff"/><rect x="979" y="350" width="102" height="6" fill="#ffffff"/><rect x="1081" y="350" width="6" height="6" fill="#f5f5f5"/><rect x="1087" y="350" width="6" height="6" fill="#d5d5d5"/><rect x="1093" y="350" width="6" height="6" fill="#bebebe"/><rect x="1099" y="350" width="6" height="6" fill="#aaaaaa"/><rect x="1105" y="350" width="6" height="6" fill="#e9e9e9"/><rect x="1111" y="350" width="6" height="6" fill="#d5d5d5"/><rect x="1117" y="350" width="6" height="6" fill="#ababab"/><rect x="1123" y="350" width="6" height="6" fill="#c9c9c9"/><rect x="1129" y="350" width="6" height="6" fill="#adadad"/><rect x="1135" y="350" width="6" height="6" fill="#e1e1e1"/><rect x="1141" y="350" width="6" height="6" fill="#c7c7c7"/><rect x="1147" y="350" width="6" height="6" fill="#b0b0b0"/><rect x="1153" y="350" width="6" height="6" fill="#c9c9c9"/><rect x="1159" y="350" width="1" height="6" fill="#ffffff"/><rect x="979" y="356" width="156" height="7" fill="#ececec"/><rect x="1135" y="356" width="6" height="7" fill="#eaeaea"/><rect x="1141" y="356" width="19" height="7" fill="#ececec"/><rect x="979" y="363" width="114" height="6" fill="#ebebeb"/><rect x="1093" y="363" width="12" height="6" fill="#e0e0e0"/><rect x="1105" y="363" width="6" height="6" fill="#ebebeb"/><rect x="1111" y="363" width="12" height="6" fill="#d4d4d4"/><rect x="1123" y="363" width="6" height="6" fill="#cecece"/><rect x="1129" y="363" width="6" height="6" fill="#c5c5c5"/><rect x="1135" y="363" width="6" height="6" fill="#ebebeb"/><rect x="1141" y="363" width="6" height="6" fill="#d3d3d3"/><rect x="1147" y="363" width="6" height="6" fill="#dcdcdc"/><rect x="1153" y="363" width="6" height="6" fill="#d5d5d5"/><rect x="1159" y="363" width="1" height="6" fill="#ebebeb"/><rect x="979" y="369" width="102" height="6" fill="#ebebeb"/><rect x="1081" y="369" width="6" height="6" fill="#dfdfdf"/><rect x="1087" y="369" width="6" height="6" fill="#cecece"/><rect x="1093" y="369" width="6" height="6" fill="#b2b2b2"/><rect x="1099" y="369" width="6" height="6" fill="#8e8e8e"/><rect x="1105" y="369" width="6" height="6" fill="#ebebeb"/><rect x="1111" y="369" width="6" height="6" fill="#b6b6b6"/><rect x="1117" y="369" width="6" height="6" fill="#b4b4b4"/><rect x="1123" y="369" width="6" height="6" fill="#b0b0b0"/><rect x="1129" y="369" width="6" height="6" fill="#999999"/><rect x="1135" y="369" width="6" height="6" fill="#e7e7e7"/><rect x="1141" y="369" width="6" height="6" fill="#a9a9a9"/><rect x="1147" y="369" width="6" height="6" fill="#797979"/><rect x="1153" y="369" width="6" height="6" fill="#b6b6b6"/><rect x="1159" y="369" width="1" height="6" fill="#ebebeb"/><rect x="979" y="375" width="108" height="6" fill="#ebebeb"/><rect x="1087" y="375" width="6" height="6" fill="#dcdcdc"/><rect x="1093" y="375" width="6" height="6" fill="#b3b3b3"/><rect x="1099" y="375" width="6" height="6" fill="#b0b0b0"/><rect x="1105" y="375" width="6" height="6" fill="#d9d9d9"/><rect x="1111" y="375" width="6" height="6" fill="#c0c0c0"/><rect x="1117" y="375" width="6" height="6" fill="#c8c8c8"/><rect x="1123" y="375" width="6" height="6" fill="#d3d3d3"/><rect x="1129" y="375" width="6" height="6" fill="#afafaf"/><rect x="1135" y="375" width="6" height="6" fill="#cecece"/><rect x="1141" y="375" width="6" height="6" fill="#c9c9c9"/><rect x="1147" y="375" width="6" height="6" fill="#b6b6b6"/><rect x="1153" y="375" width="6" height="6" fill="#c2c2c2"/><rect x="1159" y="375" width="1" height="6" fill="#ebebeb"/><rect x="979" y="381" width="181" height="6" fill="#e9e9e9"/><rect x="979" y="387" width="108" height="6" fill="#ffffff"/><rect x="1087" y="387" width="6" height="6" fill="#e8e8e8"/><rect x="1093" y="387" width="6" height="6" fill="#d7d7d7"/><rect x="1099" y="387" width="6" height="6" fill="#c4c4c4"/><rect x="1105" y="387" width="6" height="6" fill="#ffffff"/><rect x="1111" y="387" width="12" height="6" fill="#dddddd"/><rect x="1123" y="387" width="6" height="6" fill="#e5e5e5"/><rect x="1129" y="387" width="6" height="6" fill="#c6c6c6"/><rect x="1135" y="387" width="6" height="6" fill="#ffffff"/><rect x="1141" y="387" width="6" height="6" fill="#d8d8d8"/><rect x="1147" y="387" width="6" height="6" fill="#cecece"/><rect x="1153" y="387" width="6" height="6" fill="#e0e0e0"/><rect x="1159" y="387" width="1" height="6" fill="#ffffff"/><rect x="979" y="393" width="102" height="6" fill="#ffffff"/><rect x="1081" y="393" width="6" height="6" fill="#f2f2f2"/><rect x="1087" y="393" width="6" height="6" fill="#dddddd"/><rect x="1093" y="393" width="6" height="6" fill="#cbcbcb"/><rect x="1099" y="393" width="6" height="6" fill="#bdbdbd"/><rect x="1105" y="393" width="6" height="6" fill="#fefefe"/><rect x="1111" y="393" width="6" height="6" fill="#afafaf"/><rect x="1117" y="393" width="6" height="6" fill="#cfcfcf"/><rect x="1123" y="393" width="6" height="6" fill="#b0b0b0"/><rect x="1129" y="393" width="6" height="6" fill="#b5b5b5"/><rect x="1135" y="393" width="6" height="6" fill="#efefef"/><rect x="1141" y="393" width="6" height="6" fill="#e3e3e3"/><rect x="1147" y="393" width="6" height="6" fill="#9e9e9e"/><rect x="1153" y="393" width="6" height="6" fill="#c4c4c4"/><rect x="1159" y="393" width="1" height="6" fill="#ffffff"/><rect x="979" y="399" width="108" height="6" fill="#ffffff"/><rect x="1087" y="399" width="6" height="6" fill="#e3e3e3"/><rect x="1093" y="399" width="6" height="6" fill="#d8d8d8"/><rect x="1099" y="399" width="6" height="6" fill="#c8c8c8"/><rect x="1105" y="399" width="6" height="6" fill="#ededed"/><rect x="1111" y="399" width="6" height="6" fill="#dedede"/><rect x="1117" y="399" width="6" height="6" fill="#dadada"/><rect x="1123" y="399" width="6" height="6" fill="#d4d4d4"/><rect x="1129" y="399" width="6" height="6" fill="#cbcbcb"/><rect x="1135" y="399" width="6" height="6" fill="#e4e4e4"/><rect x="1141" y="399" width="6" height="6" fill="#d8d8d8"/><rect x="1147" y="399" width="6" height="6" fill="#d2d2d2"/><rect x="1153" y="399" width="6" height="6" fill="#dcdcdc"/><rect x="1159" y="399" width="1" height="6" fill="#ffffff"/><rect x="979" y="405" width="181" height="6" fill="#e4e4e4"/><rect x="979" y="411" width="120" height="6" fill="#ebebeb"/><rect x="1099" y="411" width="6" height="6" fill="#bcbcbc"/><rect x="1105" y="411" width="6" height="6" fill="#ebebeb"/><rect x="1111" y="411" width="6" height="6" fill="#c5c5c5"/><rect x="1117" y="411" width="6" height="6" fill="#bfbfbf"/><rect x="1123" y="411" width="6" height="6" fill="#c9c9c9"/><rect x="1129" y="411" width="6" height="6" fill="#b0b0b0"/><rect x="1135" y="411" width="6" height="6" fill="#ebebeb"/><rect x="1141" y="411" width="6" height="6" fill="#c0c0c0"/><rect x="1147" y="411" width="6" height="6" fill="#b3b3b3"/><rect x="1153" y="411" width="6" height="6" fill="#c1c1c1"/><rect x="1159" y="411" width="1" height="6" fill="#ebebeb"/><rect x="979" y="417" width="114" height="6" fill="#ebebeb"/><rect x="1093" y="417" width="6" height="6" fill="#c5c5c5"/><rect x="1099" y="417" width="6" height="6" fill="#7f7f7f"/><rect x="1105" y="417" width="6" height="6" fill="#e2e2e2"/><rect x="1111" y="417" width="6" height="6" fill="#c0c0c0"/><rect x="1117" y="417" width="6" height="6" fill="#d4d4d4"/><rect x="1123" y="417" width="6" height="6" fill="#adadad"/><rect x="1129" y="417" width="6" height="6" fill="#929292"/><rect x="1135" y="417" width="6" height="6" fill="#dfdfdf"/><rect x="1141" y="417" width="6" height="6" fill="#b6b6b6"/><rect x="1147" y="417" width="6" height="6" fill="#818181"/><rect x="1153" y="417" width="6" height="6" fill="#b6b6b6"/><rect x="1159" y="417" width="1" height="6" fill="#ebebeb"/><rect x="979" y="423" width="120" height="6" fill="#ebebeb"/><rect x="1099" y="423" width="12" height="6" fill="#e3e3e3"/><rect x="1111" y="423" width="18" height="6" fill="#cfcfcf"/><rect x="1129" y="423" width="6" height="6" fill="#cbcbcb"/><rect x="1135" y="423" width="6" height="6" fill="#d8d8d8"/><rect x="1141" y="423" width="6" height="6" fill="#d5d5d5"/><rect x="1147" y="423" width="6" height="6" fill="#dddddd"/><rect x="1153" y="423" width="6" height="6" fill="#d7d7d7"/><rect x="1159" y="423" width="1" height="6" fill="#ebebeb"/><rect x="979" y="429" width="181" height="6" fill="#f0f0f0"/><rect x="979" y="435" width="114" height="6" fill="#ffffff"/><rect x="1093" y="435" width="6" height="6" fill="#fbfbfb"/><rect x="1099" y="435" width="6" height="6" fill="#b1b1b1"/><rect x="1105" y="435" width="6" height="6" fill="#fcfcfc"/><rect x="1111" y="435" width="6" height="6" fill="#d4d4d4"/><rect x="1117" y="435" width="6" height="6" fill="#a5a5a5"/><rect x="1123" y="435" width="6" height="6" fill="#b7b7b7"/><rect x="1129" y="435" width="6" height="6" fill="#aaaaaa"/><rect x="1135" y="435" width="6" height="6" fill="#f9f9f9"/><rect x="1141" y="435" width="6" height="6" fill="#b8b8b8"/><rect x="1147" y="435" width="6" height="6" fill="#bababa"/><rect x="1153" y="435" width="6" height="6" fill="#c6c6c6"/><rect x="1159" y="435" width="1" height="6" fill="#ffffff"/><rect x="979" y="441" width="114" height="6" fill="#ffffff"/><rect x="1093" y="441" width="6" height="6" fill="#e1e1e1"/><rect x="1099" y="441" width="6" height="6" fill="#c9c9c9"/><rect x="1105" y="441" width="6" height="6" fill="#f0f0f0"/><rect x="1111" y="441" width="6" height="6" fill="#c0c0c0"/><rect x="1117" y="441" width="6" height="6" fill="#8e8e8e"/><rect x="1123" y="441" width="6" height="6" fill="#9f9f9f"/><rect x="1129" y="441" width="6" height="6" fill="#9d9d9d"/><rect x="1135" y="441" width="6" height="6" fill="#e4e4e4"/><rect x="1141" y="441" width="6" height="6" fill="#b2b2b2"/><rect x="1147" y="441" width="6" height="6" fill="#8f8f8f"/><rect x="1153" y="441" width="6" height="6" fill="#bababa"/><rect x="1159" y="441" width="1" height="6" fill="#ffffff"/><rect x="979" y="447" width="156" height="6" fill="#f0f0f0"/><rect x="1135" y="447" width="6" height="6" fill="#e6e6e6"/><rect x="1141" y="447" width="19" height="6" fill="#f0f0f0"/><rect x="979" y="453" width="181" height="6" fill="#ebebeb"/><rect x="979" y="459" width="114" height="6" fill="#ebebeb"/><rect x="1093" y="459" width="6" height="6" fill="#e8e8e8"/><rect x="1099" y="459" width="6" height="6" fill="#909090"/><rect x="1105" y="459" width="6" height="6" fill="#eaeaea"/><rect x="1111" y="459" width="6" height="6" fill="#acacac"/><rect x="1117" y="459" width="6" height="6" fill="#8d8d8d"/><rect x="1123" y="459" width="6" height="6" fill="#adadad"/><rect x="1129" y="459" width="6" height="6" fill="#989898"/><rect x="1135" y="459" width="6" height="6" fill="#e9e9e9"/><rect x="1141" y="459" width="6" height="6" fill="#c5c5c5"/><rect x="1147" y="459" width="6" height="6" fill="#8a8a8a"/><rect x="1153" y="459" width="6" height="6" fill="#b4b4b4"/><rect x="1159" y="459" width="1" height="6" fill="#ebebeb"/><rect x="979" y="465" width="114" height="6" fill="#ebebeb"/><rect x="1093" y="465" width="6" height="6" fill="#cacaca"/><rect x="1099" y="465" width="6" height="6" fill="#969696"/><rect x="1105" y="465" width="6" height="6" fill="#d7d7d7"/><rect x="1111" y="465" width="6" height="6" fill="#aeaeae"/><rect x="1117" y="465" width="6" height="6" fill="#939393"/><rect x="1123" y="465" width="6" height="6" fill="#aeaeae"/><rect x="1129" y="465" width="6" height="6" fill="#989898"/><rect x="1135" y="465" width="6" height="6" fill="#d5d5d5"/><rect x="1141" y="465" width="6" height="6" fill="#bababa"/><rect x="1147" y="465" width="6" height="6" fill="#9f9f9f"/><rect x="1153" y="465" width="6" height="6" fill="#aeaeae"/><rect x="1159" y="465" width="1" height="6" fill="#ebebeb"/><rect x="979" y="471" width="156" height="6" fill="#e4e4e4"/><rect x="1135" y="471" width="6" height="6" fill="#dfdfdf"/><rect x="1141" y="471" width="19" height="6" fill="#e4e4e4"/><rect x="979" y="477" width="120" height="6" fill="#ffffff"/><rect x="1099" y="477" width="6" height="6" fill="#ededed"/><rect x="1105" y="477" width="6" height="6" fill="#ffffff"/><rect x="1111" y="477" width="6" height="6" fill="#f9f9f9"/><rect x="1117" y="477" width="6" height="6" fill="#fbfbfb"/><rect x="1123" y="477" width="6" height="6" fill="#f1f1f1"/><rect x="1129" y="477" width="6" height="6" fill="#eaeaea"/><rect x="1135" y="477" width="6" height="6" fill="#ffffff"/><rect x="1141" y="477" width="6" height="6" fill="#f1f1f1"/><rect x="1147" y="477" width="6" height="6" fill="#f9f9f9"/><rect x="1153" y="477" width="6" height="6" fill="#f2f2f2"/><rect x="1159" y="477" width="1" height="6" fill="#ffffff"/><rect x="979" y="483" width="114" height="6" fill="#ffffff"/><rect x="1093" y="483" width="6" height="6" fill="#e5e5e5"/><rect x="1099" y="483" width="6" height="6" fill="#7e7e7e"/><rect x="1105" y="483" width="6" height="6" fill="#fcfcfc"/><rect x="1111" y="483" width="6" height="6" fill="#b3b3b3"/><rect x="1117" y="483" width="6" height="6" fill="#e9e9e9"/><rect x="1123" y="483" width="6" height="6" fill="#b2b2b2"/><rect x="1129" y="483" width="6" height="6" fill="#949494"/><rect x="1135" y="483" width="6" height="6" fill="#fdfdfd"/><rect x="1141" y="483" width="6" height="6" fill="#bfbfbf"/><rect x="1147" y="483" width="6" height="6" fill="#8b8b8b"/><rect x="1153" y="483" width="6" height="6" fill="#c0c0c0"/><rect x="1159" y="483" width="1" height="6" fill="#ffffff"/><rect x="979" y="489" width="114" height="6" fill="#ffffff"/><rect x="1093" y="489" width="6" height="6" fill="#ebebeb"/><rect x="1099" y="489" width="6" height="6" fill="#b4b4b4"/><rect x="1105" y="489" width="6" height="6" fill="#eaeaea"/><rect x="1111" y="489" width="6" height="6" fill="#c6c6c6"/><rect x="1117" y="489" width="6" height="6" fill="#c2c2c2"/><rect x="1123" y="489" width="6" height="6" fill="#d3d3d3"/><rect x="1129" y="489" width="6" height="6" fill="#bababa"/><rect x="1135" y="489" width="6" height="6" fill="#dedede"/><rect x="1141" y="489" width="6" height="6" fill="#cccccc"/><rect x="1147" y="489" width="6" height="6" fill="#bababa"/><rect x="1153" y="489" width="6" height="6" fill="#cdcdcd"/><rect x="1159" y="489" width="1" height="6" fill="#ffffff"/><rect x="979" y="495" width="181" height="6" fill="#e9e9e9"/><rect x="979" y="501" width="120" height="6" fill="#ebebeb"/><rect x="1099" y="501" width="6" height="6" fill="#bdbdbd"/><rect x="1105" y="501" width="6" height="6" fill="#ebebeb"/><rect x="1111" y="501" width="6" height="6" fill="#d2d2d2"/><rect x="1117" y="501" width="6" height="6" fill="#dddddd"/><rect x="1123" y="501" width="6" height="6" fill="#d8d8d8"/><rect x="1129" y="501" width="6" height="6" fill="#c3c3c3"/><rect x="1135" y="501" width="6" height="6" fill="#ebebeb"/><rect x="1141" y="501" width="6" height="6" fill="#cecece"/><rect x="1147" y="501" width="12" height="6" fill="#d0d0d0"/><rect x="1159" y="501" width="1" height="6" fill="#ebebeb"/><rect x="979" y="507" width="114" height="6" fill="#ebebeb"/><rect x="1093" y="507" width="6" height="6" fill="#c9c9c9"/><rect x="1099" y="507" width="6" height="6" fill="#9d9d9d"/><rect x="1105" y="507" width="6" height="6" fill="#e6e6e6"/><rect x="1111" y="507" width="6" height="6" fill="#a1a1a1"/><rect x="1117" y="507" width="6" height="6" fill="#9f9f9f"/><rect x="1123" y="507" width="6" height="6" fill="#8a8a8a"/><rect x="1129" y="507" width="6" height="6" fill="#a5a5a5"/><rect x="1135" y="507" width="6" height="6" fill="#dddddd"/><rect x="1141" y="507" width="6" height="6" fill="#c9c9c9"/><rect x="1147" y="507" width="6" height="6" fill="#949494"/><rect x="1153" y="507" width="6" height="6" fill="#b7b7b7"/><rect x="1159" y="507" width="1" height="6" fill="#ebebeb"/><rect x="979" y="513" width="114" height="6" fill="#ebebeb"/><rect x="1093" y="513" width="6" height="6" fill="#e7e7e7"/><rect x="1099" y="513" width="6" height="6" fill="#b4b4b4"/><rect x="1105" y="513" width="6" height="6" fill="#dbdbdb"/><rect x="1111" y="513" width="6" height="6" fill="#c7c7c7"/><rect x="1117" y="513" width="12" height="6" fill="#c9c9c9"/><rect x="1129" y="513" width="6" height="6" fill="#b3b3b3"/><rect x="1135" y="513" width="6" height="6" fill="#d2d2d2"/><rect x="1141" y="513" width="6" height="6" fill="#bdbdbd"/><rect x="1147" y="513" width="6" height="6" fill="#c4c4c4"/><rect x="1153" y="513" width="6" height="6" fill="#c7c7c7"/><rect x="1159" y="513" width="1" height="6" fill="#ebebeb"/><rect x="979" y="519" width="181" height="6" fill="#ececec"/><rect x="979" y="525" width="114" height="6" fill="#ffffff"/><rect x="1093" y="525" width="6" height="6" fill="#fdfdfd"/><rect x="1099" y="525" width="6" height="6" fill="#bdbdbd"/><rect x="1105" y="525" width="6" height="6" fill="#fefefe"/><rect x="1111" y="525" width="6" height="6" fill="#d3d3d3"/><rect x="1117" y="525" width="6" height="6" fill="#d7d7d7"/><rect x="1123" y="525" width="6" height="6" fill="#dedede"/><rect x="1129" y="525" width="6" height="6" fill="#bfbfbf"/><rect x="1135" y="525" width="6" height="6" fill="#fefefe"/><rect x="1141" y="525" width="6" height="6" fill="#dbdbdb"/><rect x="1147" y="525" width="6" height="6" fill="#bfbfbf"/><rect x="1153" y="525" width="6" height="6" fill="#e0e0e0"/><rect x="1159" y="525" width="1" height="6" fill="#ffffff"/><rect x="979" y="531" width="114" height="6" fill="#ffffff"/><rect x="1093" y="531" width="6" height="6" fill="#e0e0e0"/><rect x="1099" y="531" width="6" height="6" fill="#bfbfbf"/><rect x="1105" y="531" width="6" height="6" fill="#fefefe"/><rect x="1111" y="531" width="6" height="6" fill="#c5c5c5"/><rect x="1117" y="531" width="6" height="6" fill="#bdbdbd"/><rect x="1123" y="531" width="6" height="6" fill="#bbbbbb"/><rect x="1129" y="531" width="6" height="6" fill="#8f8f8f"/><rect x="1135" y="531" width="6" height="6" fill="#f8f8f8"/><rect x="1141" y="531" width="6" height="6" fill="#d2d2d2"/><rect x="1147" y="531" width="6" height="6" fill="#cccccc"/><rect x="1153" y="531" width="6" height="6" fill="#bfbfbf"/><rect x="1159" y="531" width="1" height="6" fill="#ffffff"/><rect x="979" y="537" width="114" height="7" fill="#ffffff"/><rect x="1093" y="537" width="6" height="7" fill="#fafafa"/><rect x="1099" y="537" width="6" height="7" fill="#cdcdcd"/><rect x="1105" y="537" width="6" height="7" fill="#ededed"/><rect x="1111" y="537" width="6" height="7" fill="#dedede"/><rect x="1117" y="537" width="6" height="7" fill="#e4e4e4"/><rect x="1123" y="537" width="6" height="7" fill="#d8d8d8"/><rect x="1129" y="537" width="6" height="7" fill="#d2d2d2"/><rect x="1135" y="537" width="6" height="7" fill="#e4e4e4"/><rect x="1141" y="537" width="6" height="7" fill="#f0f0f0"/><rect x="1147" y="537" width="6" height="7" fill="#ededed"/><rect x="1153" y="537" width="6" height="7" fill="#e1e1e1"/><rect x="1159" y="537" width="1" height="7" fill="#ffffff"/><rect x="979" y="544" width="181" height="6" fill="#e2e2e2"/><rect x="979" y="550" width="114" height="6" fill="#ebebeb"/><rect x="1093" y="550" width="6" height="6" fill="#e9e9e9"/><rect x="1099" y="550" width="6" height="6" fill="#adadad"/><rect x="1105" y="550" width="6" height="6" fill="#ebebeb"/><rect x="1111" y="550" width="6" height="6" fill="#d2d2d2"/><rect x="1117" y="550" width="6" height="6" fill="#a9a9a9"/><rect x="1123" y="550" width="6" height="6" fill="#c9c9c9"/><rect x="1129" y="550" width="6" height="6" fill="#a5a5a5"/><rect x="1135" y="550" width="6" height="6" fill="#e8e8e8"/><rect x="1141" y="550" width="6" height="6" fill="#bbbbbb"/><rect x="1147" y="550" width="6" height="6" fill="#aaaaaa"/><rect x="1153" y="550" width="6" height="6" fill="#bdbdbd"/><rect x="1159" y="550" width="1" height="6" fill="#ebebeb"/><rect x="979" y="556" width="114" height="6" fill="#ebebeb"/><rect x="1093" y="556" width="6" height="6" fill="#c5c5c5"/><rect x="1099" y="556" width="6" height="6" fill="#767676"/><rect x="1105" y="556" width="6" height="6" fill="#d9d9d9"/><rect x="1111" y="556" width="6" height="6" fill="#b0b0b0"/><rect x="1117" y="556" width="6" height="6" fill="#888888"/><rect x="1123" y="556" width="6" height="6" fill="#8e8e8e"/><rect x="1129" y="556" width="6" height="6" fill="#959595"/><rect x="1135" y="556" width="6" height="6" fill="#d5d5d5"/><rect x="1141" y="556" width="6" height="6" fill="#aeaeae"/><rect x="1147" y="556" width="6" height="6" fill="#828282"/><rect x="1153" y="556" width="6" height="6" fill="#afafaf"/><rect x="1159" y="556" width="1" height="6" fill="#ebebeb"/><rect x="979" y="562" width="120" height="6" fill="#e3e3e3"/><rect x="1099" y="562" width="6" height="6" fill="#dadada"/><rect x="1105" y="562" width="6" height="6" fill="#e0e0e0"/><rect x="1111" y="562" width="6" height="6" fill="#e3e3e3"/><rect x="1117" y="562" width="6" height="6" fill="#dedede"/><rect x="1123" y="562" width="12" height="6" fill="#dbdbdb"/><rect x="1135" y="562" width="6" height="6" fill="#d5d5d5"/><rect x="1141" y="562" width="6" height="6" fill="#dbdbdb"/><rect x="1147" y="562" width="6" height="6" fill="#e0e0e0"/><rect x="1153" y="562" width="6" height="6" fill="#dcdcdc"/><rect x="1159" y="562" width="1" height="6" fill="#e3e3e3"/><rect x="979" y="568" width="181" height="6" fill="#fbfbfb"/><rect x="979" y="574" width="120" height="6" fill="#ffffff"/><rect x="1099" y="574" width="6" height="6" fill="#b2b2b2"/><rect x="1105" y="574" width="6" height="6" fill="#ffffff"/><rect x="1111" y="574" width="6" height="6" fill="#bababa"/><rect x="1117" y="574" width="6" height="6" fill="#bebebe"/><rect x="1123" y="574" width="6" height="6" fill="#b1b1b1"/><rect x="1129" y="574" width="6" height="6" fill="#a8a8a8"/><rect x="1135" y="574" width="6" height="6" fill="#f8f8f8"/><rect x="1141" y="574" width="6" height="6" fill="#d0d0d0"/><rect x="1147" y="574" width="6" height="6" fill="#a3a3a3"/><rect x="1153" y="574" width="6" height="6" fill="#c3c3c3"/><rect x="1159" y="574" width="1" height="6" fill="#ffffff"/><rect x="979" y="580" width="114" height="6" fill="#ffffff"/><rect x="1093" y="580" width="6" height="6" fill="#d6d6d6"/><rect x="1099" y="580" width="6" height="6" fill="#9c9c9c"/><rect x="1105" y="580" width="6" height="6" fill="#ebebeb"/><rect x="1111" y="580" width="6" height="6" fill="#b1b1b1"/><rect x="1117" y="580" width="6" height="6" fill="#c0c0c0"/><rect x="1123" y="580" width="6" height="6" fill="#c7c7c7"/><rect x="1129" y="580" width="6" height="6" fill="#a0a0a0"/><rect x="1135" y="580" width="6" height="6" fill="#e4e4e4"/><rect x="1141" y="580" width="6" height="6" fill="#c4c4c4"/><rect x="1147" y="580" width="6" height="6" fill="#969696"/><rect x="1153" y="580" width="6" height="6" fill="#bdbdbd"/><rect x="1159" y="580" width="1" height="6" fill="#ffffff"/><rect x="979" y="586" width="156" height="6" fill="#eeeeee"/><rect x="1135" y="586" width="6" height="6" fill="#e5e5e5"/><rect x="1141" y="586" width="19" height="6" fill="#eeeeee"/><rect x="979" y="592" width="181" height="6" fill="#ebebeb"/><rect x="979" y="598" width="114" height="6" fill="#ebebeb"/><rect x="1093" y="598" width="6" height="6" fill="#e1e1e1"/><rect x="1099" y="598" width="6" height="6" fill="#7f7f7f"/><rect x="1105" y="598" width="6" height="6" fill="#e4e4e4"/><rect x="1111" y="598" width="6" height="6" fill="#bfbfbf"/><rect x="1117" y="598" width="6" height="6" fill="#acacac"/><rect x="1123" y="598" width="6" height="6" fill="#afafaf"/><rect x="1129" y="598" width="6" height="6" fill="#7b7b7b"/><rect x="1135" y="598" width="6" height="6" fill="#ebebeb"/><rect x="1141" y="598" width="6" height="6" fill="#9b9b9b"/><rect x="1147" y="598" width="6" height="6" fill="#878787"/><rect x="1153" y="598" width="6" height="6" fill="#ababab"/><rect x="1159" y="598" width="1" height="6" fill="#ebebeb"/><rect x="979" y="604" width="114" height="6" fill="#ebebeb"/><rect x="1093" y="604" width="6" height="6" fill="#cfcfcf"/><rect x="1099" y="604" width="6" height="6" fill="#989898"/><rect x="1105" y="604" width="6" height="6" fill="#dbdbdb"/><rect x="1111" y="604" width="6" height="6" fill="#ababab"/><rect x="1117" y="604" width="6" height="6" fill="#cccccc"/><rect x="1123" y="604" width="6" height="6" fill="#adadad"/><rect x="1129" y="604" width="6" height="6" fill="#a9a9a9"/><rect x="1135" y="604" width="6" height="6" fill="#cecece"/><rect x="1141" y="604" width="6" height="6" fill="#b6b6b6"/><rect x="1147" y="604" width="6" height="6" fill="#9e9e9e"/><rect x="1153" y="604" width="6" height="6" fill="#b9b9b9"/><rect x="1159" y="604" width="1" height="6" fill="#ebebeb"/><rect x="979" y="610" width="181" height="6" fill="#e6e6e6"/><rect x="979" y="616" width="120" height="6" fill="#ffffff"/><rect x="1099" y="616" width="6" height="6" fill="#dcdcdc"/><rect x="1105" y="616" width="6" height="6" fill="#ffffff"/><rect x="1111" y="616" width="6" height="6" fill="#e2e2e2"/><rect x="1117" y="616" width="12" height="6" fill="#e9e9e9"/><rect x="1129" y="616" width="6" height="6" fill="#e0e0e0"/><rect x="1135" y="616" width="6" height="6" fill="#ffffff"/><rect x="1141" y="616" width="6" height="6" fill="#e6e6e6"/><rect x="1147" y="616" width="6" height="6" fill="#eeeeee"/><rect x="1153" y="616" width="6" height="6" fill="#e8e8e8"/><rect x="1159" y="616" width="1" height="6" fill="#ffffff"/><rect x="979" y="622" width="114" height="6" fill="#ffffff"/><rect x="1093" y="622" width="6" height="6" fill="#dddddd"/><rect x="1099" y="622" width="6" height="6" fill="#a8a8a8"/><rect x="1105" y="622" width="6" height="6" fill="#fcfcfc"/><rect x="1111" y="622" width="6" height="6" fill="#bcbcbc"/><rect x="1117" y="622" width="6" height="6" fill="#a5a5a5"/><rect x="1123" y="622" width="6" height="6" fill="#b8b8b8"/><rect x="1129" y="622" width="6" height="6" fill="#959595"/><rect x="1135" y="622" width="6" height="6" fill="#fbfbfb"/><rect x="1141" y="622" width="6" height="6" fill="#c5c5c5"/><rect x="1147" y="622" width="6" height="6" fill="#8c8c8c"/><rect x="1153" y="622" width="6" height="6" fill="#c5c5c5"/><rect x="1159" y="622" width="1" height="6" fill="#ffffff"/><rect x="979" y="628" width="114" height="6" fill="#ffffff"/><rect x="1093" y="628" width="6" height="6" fill="#fafafa"/><rect x="1099" y="628" width="6" height="6" fill="#bbbbbb"/><rect x="1105" y="628" width="6" height="6" fill="#ebebeb"/><rect x="1111" y="628" width="6" height="6" fill="#d5d5d5"/><rect x="1117" y="628" width="6" height="6" fill="#c0c0c0"/><rect x="1123" y="628" width="6" height="6" fill="#d0d0d0"/><rect x="1129" y="628" width="6" height="6" fill="#b8b8b8"/><rect x="1135" y="628" width="6" height="6" fill="#e0e0e0"/><rect x="1141" y="628" width="6" height="6" fill="#d0d0d0"/><rect x="1147" y="628" width="6" height="6" fill="#c3c3c3"/><rect x="1153" y="628" width="6" height="6" fill="#d2d2d2"/><rect x="1159" y="628" width="1" height="6" fill="#ffffff"/><rect x="979" y="634" width="181" height="6" fill="#e6e6e6"/><rect x="979" y="640" width="114" height="6" fill="#ebebeb"/><rect x="1093" y="640" width="6" height="6" fill="#e7e7e7"/><rect x="1099" y="640" width="6" height="6" fill="#b8b8b8"/><rect x="1105" y="640" width="6" height="6" fill="#e8e8e8"/><rect x="1111" y="640" width="6" height="6" fill="#cacaca"/><rect x="1117" y="640" width="6" height="6" fill="#d3d3d3"/><rect x="1123" y="640" width="6" height="6" fill="#d0d0d0"/><rect x="1129" y="640" width="6" height="6" fill="#b8b8b8"/><rect x="1135" y="640" width="6" height="6" fill="#ebebeb"/><rect x="1141" y="640" width="6" height="6" fill="#cccccc"/><rect x="1147" y="640" width="6" height="6" fill="#d5d5d5"/><rect x="1153" y="640" width="6" height="6" fill="#cfcfcf"/><rect x="1159" y="640" width="1" height="6" fill="#ebebeb"/><rect x="979" y="646" width="114" height="6" fill="#ebebeb"/><rect x="1093" y="646" width="6" height="6" fill="#d0d0d0"/><rect x="1099" y="646" width="6" height="6" fill="#b8b8b8"/><rect x="1105" y="646" width="6" height="6" fill="#ebebeb"/><rect x="1111" y="646" width="6" height="6" fill="#c7c7c7"/><rect x="1117" y="646" width="6" height="6" fill="#afafaf"/><rect x="1123" y="646" width="6" height="6" fill="#969696"/><rect x="1129" y="646" width="6" height="6" fill="#adadad"/><rect x="1135" y="646" width="6" height="6" fill="#eaeaea"/><rect x="1141" y="646" width="6" height="6" fill="#b3b3b3"/><rect x="1147" y="646" width="6" height="6" fill="#c5c5c5"/><rect x="1153" y="646" width="6" height="6" fill="#b7b7b7"/><rect x="1159" y="646" width="1" height="6" fill="#ebebeb"/><rect x="979" y="652" width="120" height="6" fill="#ebebeb"/><rect x="1099" y="652" width="6" height="6" fill="#d9d9d9"/><rect x="1105" y="652" width="6" height="6" fill="#dddddd"/><rect x="1111" y="652" width="6" height="6" fill="#d9d9d9"/><rect x="1117" y="652" width="6" height="6" fill="#ebebeb"/><rect x="1123" y="652" width="6" height="6" fill="#d6d6d6"/><rect x="1129" y="652" width="6" height="6" fill="#b8b8b8"/><rect x="1135" y="652" width="6" height="6" fill="#d0d0d0"/><rect x="1141" y="652" width="12" height="6" fill="#c5c5c5"/><rect x="1153" y="652" width="6" height="6" fill="#cacaca"/><rect x="1159" y="652" width="1" height="6" fill="#ebebeb"/><rect x="979" y="658" width="181" height="6" fill="#eeeeee"/><rect x="979" y="664" width="114" height="6" fill="#ffffff"/><rect x="1093" y="664" width="6" height="6" fill="#fdfdfd"/><rect x="1099" y="664" width="6" height="6" fill="#bfbfbf"/><rect x="1105" y="664" width="6" height="6" fill="#ffffff"/><rect x="1111" y="664" width="6" height="6" fill="#cccccc"/><rect x="1117" y="664" width="6" height="6" fill="#e0e0e0"/><rect x="1123" y="664" width="6" height="6" fill="#cecece"/><rect x="1129" y="664" width="6" height="6" fill="#b9b9b9"/><rect x="1135" y="664" width="6" height="6" fill="#fdfdfd"/><rect x="1141" y="664" width="6" height="6" fill="#cecece"/><rect x="1147" y="664" width="6" height="6" fill="#c3c3c3"/><rect x="1153" y="664" width="6" height="6" fill="#d2d2d2"/><rect x="1159" y="664" width="1" height="6" fill="#ffffff"/><rect x="979" y="670" width="114" height="6" fill="#ffffff"/><rect x="1093" y="670" width="6" height="6" fill="#d8d8d8"/><rect x="1099" y="670" width="6" height="6" fill="#9e9e9e"/><rect x="1105" y="670" width="6" height="6" fill="#f2f2f2"/><rect x="1111" y="670" width="12" height="6" fill="#c4c4c4"/><rect x="1123" y="670" width="6" height="6" fill="#b1b1b1"/><rect x="1129" y="670" width="6" height="6" fill="#aeaeae"/><rect x="1135" y="670" width="6" height="6" fill="#ececec"/><rect x="1141" y="670" width="6" height="6" fill="#c4c4c4"/><rect x="1147" y="670" width="6" height="6" fill="#848484"/><rect x="1153" y="670" width="6" height="6" fill="#c5c5c5"/><rect x="1159" y="670" width="1" height="6" fill="#ffffff"/><rect x="979" y="676" width="120" height="6" fill="#fbfbfb"/><rect x="1099" y="676" width="6" height="6" fill="#d7d7d7"/><rect x="1105" y="676" width="6" height="6" fill="#f1f1f1"/><rect x="1111" y="676" width="6" height="6" fill="#dedede"/><rect x="1117" y="676" width="6" height="6" fill="#e2e2e2"/><rect x="1123" y="676" width="6" height="6" fill="#e5e5e5"/><rect x="1129" y="676" width="6" height="6" fill="#dcdcdc"/><rect x="1135" y="676" width="6" height="6" fill="#e6e6e6"/><rect x="1141" y="676" width="6" height="6" fill="#e1e1e1"/><rect x="1147" y="676" width="6" height="6" fill="#ededed"/><rect x="1153" y="676" width="6" height="6" fill="#e5e5e5"/><rect x="1159" y="676" width="1" height="6" fill="#fbfbfb"/><rect x="979" y="682" width="181" height="6" fill="#e3e3e3"/><rect x="979" y="688" width="114" height="6" fill="#ebebeb"/><rect x="1093" y="688" width="6" height="6" fill="#e7e7e7"/><rect x="1099" y="688" width="6" height="6" fill="#989898"/><rect x="1105" y="688" width="6" height="6" fill="#eaeaea"/><rect x="1111" y="688" width="6" height="6" fill="#b3b3b3"/><rect x="1117" y="688" width="6" height="6" fill="#bfbfbf"/><rect x="1123" y="688" width="6" height="6" fill="#b5b5b5"/><rect x="1129" y="688" width="6" height="6" fill="#a5a5a5"/><rect x="1135" y="688" width="6" height="6" fill="#eaeaea"/><rect x="1141" y="688" width="6" height="6" fill="#cfcfcf"/><rect x="1147" y="688" width="6" height="6" fill="#a7a7a7"/><rect x="1153" y="688" width="6" height="6" fill="#bababa"/><rect x="1159" y="688" width="1" height="6" fill="#ebebeb"/><rect x="979" y="694" width="114" height="6" fill="#ebebeb"/><rect x="1093" y="694" width="6" height="6" fill="#c5c5c5"/><rect x="1099" y="694" width="6" height="6" fill="#787878"/><rect x="1105" y="694" width="6" height="6" fill="#d7d7d7"/><rect x="1111" y="694" width="6" height="6" fill="#a0a0a0"/><rect x="1117" y="694" width="6" height="6" fill="#989898"/><rect x="1123" y="694" width="6" height="6" fill="#959595"/><rect x="1129" y="694" width="6" height="6" fill="#898989"/><rect x="1135" y="694" width="6" height="6" fill="#d7d7d7"/><rect x="1141" y="694" width="6" height="6" fill="#b2b2b2"/><rect x="1147" y="694" width="6" height="6" fill="#7e7e7e"/><rect x="1153" y="694" width="6" height="6" fill="#acacac"/><rect x="1159" y="694" width="1" height="6" fill="#ebebeb"/><rect x="979" y="700" width="120" height="6" fill="#e2e2e2"/><rect x="1099" y="700" width="6" height="6" fill="#dedede"/><rect x="1105" y="700" width="6" height="6" fill="#e2e2e2"/><rect x="1111" y="700" width="6" height="6" fill="#dfdfdf"/><rect x="1117" y="700" width="6" height="6" fill="#e1e1e1"/><rect x="1123" y="700" width="12" height="6" fill="#dedede"/><rect x="1135" y="700" width="6" height="6" fill="#d7d7d7"/><rect x="1141" y="700" width="12" height="6" fill="#e2e2e2"/><rect x="1153" y="700" width="6" height="6" fill="#dfdfdf"/><rect x="1159" y="700" width="1" height="6" fill="#e2e2e2"/><rect x="979" y="706" width="181" height="6" fill="#ffffff"/><rect x="979" y="712" width="114" height="7" fill="#ffffff"/><rect x="1093" y="712" width="6" height="7" fill="#fdfdfd"/><rect x="1099" y="712" width="6" height="7" fill="#a5a5a5"/><rect x="1105" y="712" width="6" height="7" fill="#fdfdfd"/><rect x="1111" y="712" width="6" height="7" fill="#cfcfcf"/><rect x="1117" y="712" width="6" height="7" fill="#979797"/><rect x="1123" y="712" width="6" height="7" fill="#b7b7b7"/><rect x="1129" y="712" width="6" height="7" fill="#a2a2a2"/><rect x="1135" y="712" width="6" height="7" fill="#f6f6f6"/><rect x="1141" y="712" width="6" height="7" fill="#bdbdbd"/><rect x="1147" y="712" width="6" height="7" fill="#9c9c9c"/><rect x="1153" y="712" width="6" height="7" fill="#bfbfbf"/><rect x="1159" y="712" width="1" height="7" fill="#ffffff"/><rect x="979" y="719" width="114" height="6" fill="#ffffff"/><rect x="1093" y="719" width="6" height="6" fill="#dcdcdc"/><rect x="1099" y="719" width="6" height="6" fill="#a5a5a5"/><rect x="1105" y="719" width="6" height="6" fill="#ededed"/><rect x="1111" y="719" width="6" height="6" fill="#d0d0d0"/><rect x="1117" y="719" width="6" height="6" fill="#e2e2e2"/><rect x="1123" y="719" width="6" height="6" fill="#b2b2b2"/><rect x="1129" y="719" width="6" height="6" fill="#a5a5a5"/><rect x="1135" y="719" width="6" height="6" fill="#e3e3e3"/><rect x="1141" y="719" width="6" height="6" fill="#c0c0c0"/><rect x="1147" y="719" width="6" height="6" fill="#a2a2a2"/><rect x="1153" y="719" width="6" height="6" fill="#c1c1c1"/><rect x="1159" y="719" width="1" height="6" fill="#ffffff"/><rect x="979" y="725" width="156" height="6" fill="#ececec"/><rect x="1135" y="725" width="6" height="6" fill="#e5e5e5"/><rect x="1141" y="725" width="19" height="6" fill="#ececec"/><rect x="979" y="731" width="120" height="6" fill="#ebebeb"/><rect x="1099" y="731" width="6" height="6" fill="#e3e3e3"/><rect x="1105" y="731" width="6" height="6" fill="#ebebeb"/><rect x="1111" y="731" width="6" height="6" fill="#e3e3e3"/><rect x="1117" y="731" width="12" height="6" fill="#eaeaea"/><rect x="1129" y="731" width="6" height="6" fill="#e2e2e2"/><rect x="1135" y="731" width="6" height="6" fill="#ebebeb"/><rect x="1141" y="731" width="6" height="6" fill="#e3e3e3"/><rect x="1147" y="731" width="12" height="6" fill="#e6e6e6"/><rect x="1159" y="731" width="1" height="6" fill="#ebebeb"/><rect x="979" y="737" width="114" height="6" fill="#ebebeb"/><rect x="1093" y="737" width="6" height="6" fill="#d0d0d0"/><rect x="1099" y="737" width="6" height="6" fill="#7f7f7f"/><rect x="1105" y="737" width="6" height="6" fill="#e8e8e8"/><rect x="1111" y="737" width="6" height="6" fill="#bcbcbc"/><rect x="1117" y="737" width="6" height="6" fill="#a8a8a8"/><rect x="1123" y="737" width="6" height="6" fill="#aeaeae"/><rect x="1129" y="737" width="6" height="6" fill="#727272"/><rect x="1135" y="737" width="6" height="6" fill="#e9e9e9"/><rect x="1141" y="737" width="6" height="6" fill="#c0c0c0"/><rect x="1147" y="737" width="6" height="6" fill="#888888"/><rect x="1153" y="737" width="6" height="6" fill="#b1b1b1"/><rect x="1159" y="737" width="1" height="6" fill="#ebebeb"/><rect x="979" y="743" width="114" height="6" fill="#ebebeb"/><rect x="1093" y="743" width="6" height="6" fill="#dedede"/><rect x="1099" y="743" width="6" height="6" fill="#a3a3a3"/><rect x="1105" y="743" width="6" height="6" fill="#d8d8d8"/><rect x="1111" y="743" width="6" height="6" fill="#c2c2c2"/><rect x="1117" y="743" width="6" height="6" fill="#b8b8b8"/><rect x="1123" y="743" width="6" height="6" fill="#acacac"/><rect x="1129" y="743" width="6" height="6" fill="#a6a6a6"/><rect x="1135" y="743" width="6" height="6" fill="#cdcdcd"/><rect x="1141" y="743" width="6" height="6" fill="#b0b0b0"/><rect x="1147" y="743" width="6" height="6" fill="#c2c2c2"/><rect x="1153" y="743" width="6" height="6" fill="#bbbbbb"/><rect x="1159" y="743" width="1" height="6" fill="#ebebeb"/><rect x="979" y="749" width="181" height="6" fill="#e9e9e9"/><rect x="979" y="755" width="120" height="6" fill="#ffffff"/><rect x="1099" y="755" width="6" height="6" fill="#ebebeb"/><rect x="1105" y="755" width="6" height="6" fill="#ffffff"/><rect x="1111" y="755" width="12" height="6" fill="#e1e1e1"/><rect x="1123" y="755" width="6" height="6" fill="#e3e3e3"/><rect x="1129" y="755" width="6" height="6" fill="#d1d1d1"/><rect x="1135" y="755" width="6" height="6" fill="#ffffff"/><rect x="1141" y="755" width="6" height="6" fill="#e4e4e4"/><rect x="1147" y="755" width="12" height="6" fill="#e1e1e1"/><rect x="1159" y="755" width="1" height="6" fill="#ffffff"/><rect x="979" y="761" width="114" height="6" fill="#ffffff"/><rect x="1093" y="761" width="6" height="6" fill="#d9d9d9"/><rect x="1099" y="761" width="6" height="6" fill="#8d8d8d"/><rect x="1105" y="761" width="6" height="6" fill="#fdfdfd"/><rect x="1111" y="761" width="6" height="6" fill="#c6c6c6"/><rect x="1117" y="761" width="6" height="6" fill="#939393"/><rect x="1123" y="761" width="6" height="6" fill="#adadad"/><rect x="1129" y="761" width="6" height="6" fill="#b8b8b8"/><rect x="1135" y="761" width="6" height="6" fill="#fdfdfd"/><rect x="1141" y="761" width="6" height="6" fill="#afafaf"/><rect x="1147" y="761" width="6" height="6" fill="#9c9c9c"/><rect x="1153" y="761" width="6" height="6" fill="#c6c6c6"/><rect x="1159" y="761" width="1" height="6" fill="#ffffff"/><rect x="979" y="767" width="114" height="6" fill="#ffffff"/><rect x="1093" y="767" width="6" height="6" fill="#fcfcfc"/><rect x="1099" y="767" width="6" height="6" fill="#d5d5d5"/><rect x="1105" y="767" width="6" height="6" fill="#ededed"/><rect x="1111" y="767" width="6" height="6" fill="#d5d5d5"/><rect x="1117" y="767" width="6" height="6" fill="#d1d1d1"/><rect x="1123" y="767" width="6" height="6" fill="#d4d4d4"/><rect x="1129" y="767" width="6" height="6" fill="#c0c0c0"/><rect x="1135" y="767" width="6" height="6" fill="#e1e1e1"/><rect x="1141" y="767" width="6" height="6" fill="#d7d7d7"/><rect x="1147" y="767" width="6" height="6" fill="#cacaca"/><rect x="1153" y="767" width="6" height="6" fill="#d7d7d7"/><rect x="1159" y="767" width="1" height="6" fill="#ffffff"/><rect x="979" y="773" width="181" height="6" fill="#e4e4e4"/><rect x="979" y="779" width="114" height="6" fill="#ebebeb"/><rect x="1093" y="779" width="6" height="6" fill="#e8e8e8"/><rect x="1099" y="779" width="6" height="6" fill="#b4b4b4"/><rect x="1105" y="779" width="6" height="6" fill="#e8e8e8"/><rect x="1111" y="779" width="6" height="6" fill="#c2c2c2"/><rect x="1117" y="779" width="12" height="6" fill="#c6c6c6"/><rect x="1129" y="779" width="6" height="6" fill="#b6b6b6"/><rect x="1135" y="779" width="6" height="6" fill="#ebebeb"/><rect x="1141" y="779" width="6" height="6" fill="#c6c6c6"/><rect x="1147" y="779" width="6" height="6" fill="#bdbdbd"/><rect x="1153" y="779" width="6" height="6" fill="#c7c7c7"/><rect x="1159" y="779" width="1" height="6" fill="#ebebeb"/><rect x="979" y="785" width="114" height="6" fill="#ebebeb"/><rect x="1093" y="785" width="6" height="6" fill="#cfcfcf"/><rect x="1099" y="785" width="6" height="6" fill="#b8b8b8"/><rect x="1105" y="785" width="6" height="6" fill="#ebebeb"/><rect x="1111" y="785" width="6" height="6" fill="#b7b7b7"/><rect x="1117" y="785" width="6" height="6" fill="#8a8a8a"/><rect x="1123" y="785" width="6" height="6" fill="#afafaf"/><rect x="1129" y="785" width="6" height="6" fill="#999999"/><rect x="1135" y="785" width="6" height="6" fill="#e4e4e4"/><rect x="1141" y="785" width="6" height="6" fill="#b7b7b7"/><rect x="1147" y="785" width="6" height="6" fill="#838383"/><rect x="1153" y="785" width="6" height="6" fill="#b7b7b7"/><rect x="1159" y="785" width="1" height="6" fill="#ebebeb"/><rect x="979" y="791" width="120" height="6" fill="#ebebeb"/><rect x="1099" y="791" width="12" height="6" fill="#dedede"/><rect x="1111" y="791" width="6" height="6" fill="#cccccc"/><rect x="1117" y="791" width="12" height="6" fill="#d1d1d1"/><rect x="1129" y="791" width="6" height="6" fill="#c0c0c0"/><rect x="1135" y="791" width="6" height="6" fill="#d2d2d2"/><rect x="1141" y="791" width="6" height="6" fill="#cfcfcf"/><rect x="1147" y="791" width="12" height="6" fill="#d2d2d2"/><rect x="1159" y="791" width="1" height="6" fill="#ebebeb"/><rect x="979" y="797" width="181" height="6" fill="#f0f0f0"/><rect x="979" y="803" width="114" height="6" fill="#ffffff"/><rect x="1093" y="803" width="6" height="6" fill="#fcfcfc"/><rect x="1099" y="803" width="6" height="6" fill="#bdbdbd"/><rect x="1105" y="803" width="6" height="6" fill="#ffffff"/><rect x="1111" y="803" width="6" height="6" fill="#d5d5d5"/><rect x="1117" y="803" width="6" height="6" fill="#cdcdcd"/><rect x="1123" y="803" width="6" height="6" fill="#dadada"/><rect x="1129" y="803" width="6" height="6" fill="#cacaca"/><rect x="1135" y="803" width="6" height="6" fill="#ffffff"/><rect x="1141" y="803" width="6" height="6" fill="#cecece"/><rect x="1147" y="803" width="6" height="6" fill="#b7b7b7"/><rect x="1153" y="803" width="6" height="6" fill="#e0e0e0"/><rect x="1159" y="803" width="1" height="6" fill="#ffffff"/><rect x="979" y="809" width="114" height="6" fill="#ffffff"/><rect x="1093" y="809" width="6" height="6" fill="#d8d8d8"/><rect x="1099" y="809" width="6" height="6" fill="#989898"/><rect x="1105" y="809" width="6" height="6" fill="#efefef"/><rect x="1111" y="809" width="6" height="6" fill="#c8c8c8"/><rect x="1117" y="809" width="6" height="6" fill="#e1e1e1"/><rect x="1123" y="809" width="6" height="6" fill="#bebebe"/><rect x="1129" y="809" width="6" height="6" fill="#bababa"/><rect x="1135" y="809" width="6" height="6" fill="#f6f6f6"/><rect x="1141" y="809" width="6" height="6" fill="#b2b2b2"/><rect x="1147" y="809" width="6" height="6" fill="#989898"/><rect x="1153" y="809" width="6" height="6" fill="#b4b4b4"/><rect x="1159" y="809" width="1" height="6" fill="#ffffff"/><rect x="979" y="815" width="120" height="4" fill="#ffffff"/><rect x="1099" y="815" width="6" height="4" fill="#d6d6d6"/><rect x="1105" y="815" width="6" height="4" fill="#f4f4f4"/><rect x="1111" y="815" width="18" height="4" fill="#dbdbdb"/><rect x="1129" y="815" width="6" height="4" fill="#cfcfcf"/><rect x="1135" y="815" width="12" height="4" fill="#dfdfdf"/><rect x="1147" y="815" width="6" height="4" fill="#e8e8e8"/><rect x="1153" y="815" width="6" height="4" fill="#e2e2e2"/><rect x="1159" y="815" width="1" height="4" fill="#ffffff"/></svg>
<div class="abs" style="left:717px;top:335px;width:136px;height:26px;border:2px solid #217346"></div>
<div class="abs" style="left:849px;top:357px;width:6px;height:6px;background:#217346;border:1px solid #fff"></div>
<div class="abs" style="left:370px;top:336px;width:3px;height:24px;background:#217346"></div>
<div class="abs" style="left:1766px;top:199px;width:24px;height:620px;background:#f5f5f5"></div>
<div class="abs" style="left:1770px;top:199px;width:16px;height:620px;background:#e8e8e8"></div>
<div class="abs" style="left:1770px;top:199px;width:16px;height:16px;background:#fff;border:1px solid #c9c9c9;border-radius:2px"></div>
<div class="abs" style="left:1774px;top:204px;border-left:4px solid transparent;border-right:4px solid transparent;border-bottom:5px solid #6b6b6b"></div>
<div class="abs" style="left:1770px;top:216px;width:16px;height:11px;background:#fff;border:1px solid #c9c9c9;border-radius:2px"></div>
<div class="abs" style="left:1770px;top:801px;width:16px;height:18px;background:#fff;border:1px solid #c9c9c9;border-radius:2px"></div>
<div class="abs" style="left:1774px;top:808px;border-left:4px solid transparent;border-right:4px solid transparent;border-top:5px solid #6b6b6b"></div>
<div class="abs" style="left:327px;top:819px;width:1463px;height:32px;background:#f5f5f5"></div>
<div class="abs" style="left:327px;top:819px;width:1438px;height:1px;background:#c8c8c8"></div>
<div class="abs" style="left:357px;top:831px;border-top:4px solid transparent;border-bottom:4px solid transparent;border-right:4px solid #c6c6c6"></div>
<div class="abs" style="left:390px;top:831px;border-top:4px solid transparent;border-bottom:4px solid transparent;border-left:4px solid #c6c6c6"></div>
<div class="abs" style="left:441px;top:819px;width:63px;height:29px;background:#fff;border-left:1px solid #c8c8c8;border-right:1px solid #c8c8c8"></div>
<div class="abs" style="left:441px;top:845px;width:63px;height:3px;background:#217346"></div>
<div class="abs" style="left:441px;top:824px;width:63px;text-align:center;font-size:15px;font-weight:bold;color:#217346;line-height:17px">Data</div>
<svg style="left:542px;top:826px" width="19" height="19" viewBox="0 0 19 19"><circle cx="9.5" cy="9.5" r="8.3" fill="none" stroke="#6b6b6b" stroke-width="1.3"/><path d="M9.5 5 L9.5 14 M5 9.5 L14 9.5" stroke="#6b6b6b" stroke-width="1.6"/></svg>
<div class="abs" style="left:1029px;top:831px;width:2px;height:2px;background:#999;box-shadow:0 5px #999,0 9px #999"></div>
<div class="abs" style="left:1047px;top:827px;width:717px;height:17px;background:#e6e6e6"></div>
<div class="abs" style="left:1046px;top:827px;width:17px;height:17px;background:#fff;border:1px solid #c9c9c9;border-radius:2px"></div>
<div class="abs" style="left:1052px;top:832px;border-top:4px solid transparent;border-bottom:4px solid transparent;border-right:4px solid #6b6b6b"></div>
<div class="abs" style="left:1063px;top:827px;width:278px;height:17px;background:#fff;border:1px solid #c9c9c9;border-radius:2px"></div>
<div class="abs" style="left:1748px;top:827px;width:17px;height:17px;background:#fff;border:1px solid #c9c9c9;border-radius:2px"></div>
<div class="abs" style="left:1755px;top:832px;border-top:4px solid transparent;border-bottom:4px solid transparent;border-left:4px solid #6b6b6b"></div>
<div class="abs" style="left:1893px;top:38px;width:1px;height:830px;background:#c6c6c6"></div>
<svg style="left:1905px;top:51px" width="9" height="9" viewBox="0 0 9 9"><path d="M4.3 1 L1 4.6 L4.3 8.2 M7.5 1 L4.2 4.6 L7.5 8.2" fill="none" stroke="#333" stroke-width="1.1"/></svg>
<svg style="left:1900px;top:70px" width="20" height="20"><path d="M14.6 7.6 L14.6 16.8 M11.9 9.9 L11.9 15 M8.7 11 L8.7 13.8" stroke="#333" stroke-width="1.3"/></svg>
<div class="abs" style="left:1917.5px;top:95px;transform-origin:0 0;transform:rotate(90deg);font-size:13.6px;font-weight:bold;color:#222;line-height:16px;white-space:nowrap">Filters</div>
<div class="abs" style="left:226px;top:867px;width:1694px;height:22px;background:#f4f4f4;border-top:1px solid #e4e4e4"></div>
<div class="abs" style="left:1724px;top:878px;width:4px;height:1px;background:#555"></div>
<div class="abs" style="left:1733px;top:878px;width:94px;height:1px;background:#8a8a8a"></div>
<div class="abs" style="left:1781px;top:873px;width:4px;height:11px;background:#555"></div>
<div class="abs" style="left:1832px;top:872px;font-size:13px;line-height:14px;color:#333">+</div>
<div class="abs" style="left:1853px;top:872px;font-size:11.3px;line-height:14px;color:#555">122%</div>
<svg style="left:1893px;top:874px" width="14" height="11" viewBox="0 0 14 11"><rect x="0.5" y="0.5" width="12.5" height="9.5" rx="2" fill="none" stroke="#666" stroke-width="1"/><path d="M3 5 L3 3 L5 3 M10.5 3 L10.5 5 M10.5 6 L10.5 8 L8.5 8 M3 6 L3 8" fill="none" stroke="#777" stroke-width="0.9"/></svg>
</body></html>
